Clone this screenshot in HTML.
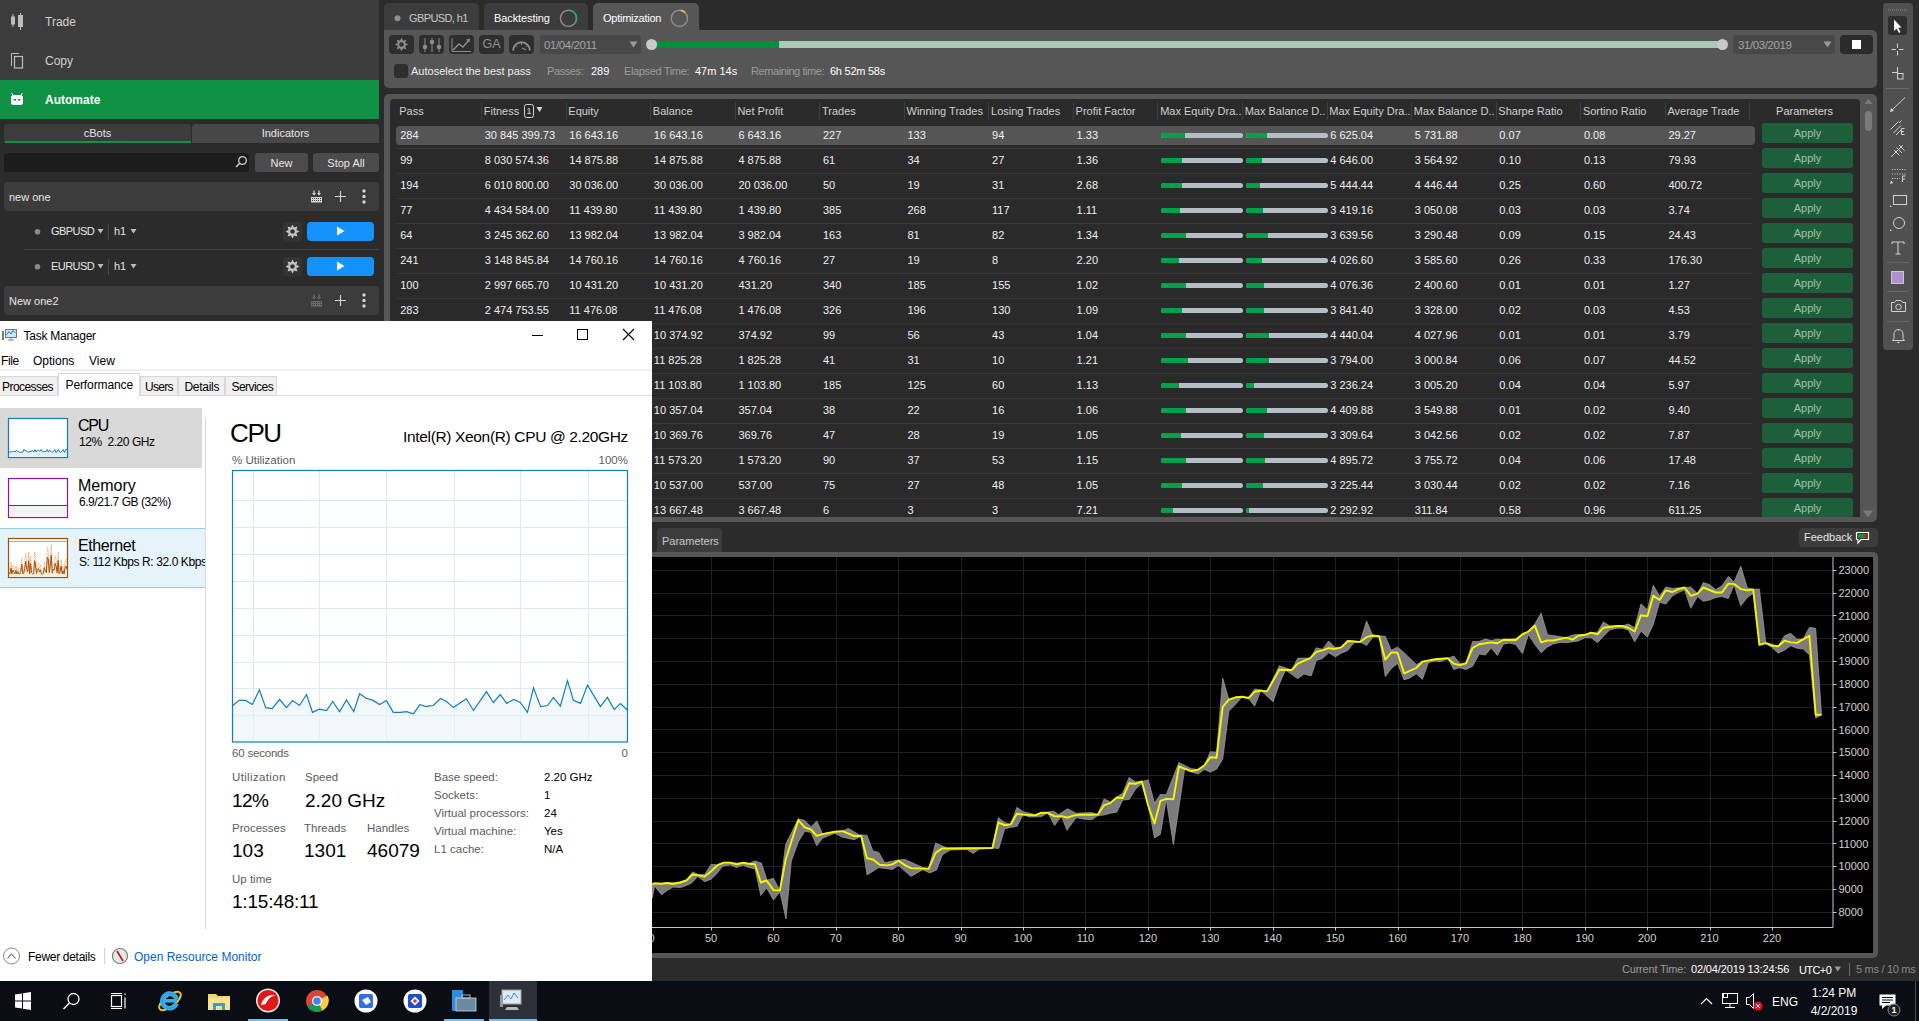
<!DOCTYPE html>
<html><head><meta charset="utf-8"><title>cTrader Optimization</title>
<style>
html,body{margin:0;padding:0;}
body{width:1919px;height:1021px;overflow:hidden;position:relative;background:#2b2b2b;font-family:"Liberation Sans", sans-serif;}
.t{position:absolute;white-space:nowrap;}
.r{position:absolute;}
svg{position:absolute;overflow:visible;}
</style></head><body>

<div class="r" style="left:0px;top:0px;width:379px;height:80px;background:#3c3c3c;"></div>
<div class="r" style="left:0px;top:80px;width:379px;height:39px;background:#0f9146;"></div>
<div class="t " style="left:45.00px;top:15.84px;font-size:12px;line-height:12px;color:#d2d2d2;font-weight:normal;">Trade</div>
<div class="t " style="left:45.00px;top:54.84px;font-size:12px;line-height:12px;color:#d2d2d2;font-weight:normal;">Copy</div>
<div class="t " style="left:45.00px;top:93.84px;font-size:12px;line-height:12px;color:#ffffff;font-weight:bold;">Automate</div>
<svg style="left:0;top:0" width="30" height="120"><rect x="11" y="16.5" width="4" height="8" fill="#bdbdbd"/><line x1="13" y1="14" x2="13" y2="27" stroke="#bdbdbd" stroke-width="1"/><rect x="18" y="15" width="5" height="12" fill="#bdbdbd"/><line x1="20.5" y1="13" x2="20.5" y2="30" stroke="#bdbdbd" stroke-width="1"/><path d="M11.5 66 V53.5 H19" fill="none" stroke="#bdbdbd" stroke-width="1"/><rect x="14.5" y="56.5" width="8" height="11.5" fill="none" stroke="#bdbdbd" stroke-width="1.2"/><rect x="11" y="95" width="12" height="10" rx="2.5" fill="#fff"/><rect x="13.5" y="99" width="2.5" height="1.5" fill="#0f9146"/><rect x="18" y="99" width="2.5" height="1.5" fill="#0f9146"/><line x1="11.5" y1="93" x2="13" y2="95" stroke="#fff" stroke-width="1"/><line x1="22.5" y1="93" x2="21" y2="95" stroke="#fff" stroke-width="1"/></svg>
<div class="r" style="left:4px;top:124px;width:187px;height:19px;background:#3c3c3c;border-radius:4px 4px 0 0;"></div>
<div class="r" style="left:5px;top:141px;width:186px;height:2px;background:#0f9146;"></div>
<div class="r" style="left:192px;top:124px;width:187px;height:19px;background:#474747;border-radius:4px 4px 0 0;"></div>
<div class="t " style="left:-202.50px;width:600px;text-align:center;top:127.69px;font-size:11px;line-height:11px;color:#e6e6e6;font-weight:normal;">cBots</div>
<div class="t " style="left:-14.50px;width:600px;text-align:center;top:127.69px;font-size:11px;line-height:11px;color:#e6e6e6;font-weight:normal;">Indicators</div>
<div class="r" style="left:4px;top:153px;width:245px;height:19px;background:#1c1c1c;border-radius:3px;"></div>
<svg style="left:234px;top:155px" width="14" height="14"><circle cx="8.5" cy="5.5" r="3.8" fill="none" stroke="#cfcfcf" stroke-width="1.3"/><line x1="5.8" y1="8.2" x2="2" y2="12" stroke="#cfcfcf" stroke-width="1.6"/></svg>
<div class="r" style="left:255px;top:153px;width:53px;height:19px;background:#4b4b4b;border-radius:3px;"></div>
<div class="t " style="left:-18.50px;width:600px;text-align:center;top:157.69px;font-size:11px;line-height:11px;color:#e6e6e6;font-weight:normal;">New</div>
<div class="r" style="left:313px;top:153px;width:66px;height:19px;background:#4b4b4b;border-radius:3px;"></div>
<div class="t " style="left:46.00px;width:600px;text-align:center;top:157.69px;font-size:11px;line-height:11px;color:#e6e6e6;font-weight:normal;">Stop All</div>
<div class="r" style="left:4px;top:182px;width:375px;height:29px;background:#3c3c3c;border-radius:4px;"></div>
<div class="t " style="left:9.00px;top:191.69px;font-size:11px;line-height:11px;color:#e6e6e6;font-weight:normal;">new one</div>
<svg style="left:305px;top:187px" width="70" height="20"><path d="M9 3.5 V7.5 M14 3.5 V7.5" stroke="#d6d6d6" stroke-width="1.3"/><path d="M7 6 L9 8.5 L11 6 Z M12 6 L14 8.5 L16 6 Z" fill="#d6d6d6"/><rect x="6" y="10" width="11" height="5.5" fill="#d6d6d6"/><rect x="7" y="11" width="1" height="1" fill="#3c3c3c"/><rect x="7" y="13" width="1" height="1" fill="#3c3c3c"/><rect x="9" y="11" width="1" height="1" fill="#3c3c3c"/><rect x="9" y="13" width="1" height="1" fill="#3c3c3c"/><rect x="11" y="11" width="1" height="1" fill="#3c3c3c"/><rect x="11" y="13" width="1" height="1" fill="#3c3c3c"/><rect x="13" y="11" width="1" height="1" fill="#3c3c3c"/><rect x="13" y="13" width="1" height="1" fill="#3c3c3c"/><rect x="15" y="11" width="1" height="1" fill="#3c3c3c"/><rect x="15" y="13" width="1" height="1" fill="#3c3c3c"/><path d="M35.5 4 V15 M30 9.5 H41" stroke="#d6d6d6" stroke-width="1.1"/><circle cx="59" cy="4" r="1.7" fill="#d6d6d6"/><circle cx="59" cy="9.5" r="1.7" fill="#d6d6d6"/><circle cx="59" cy="15" r="1.7" fill="#d6d6d6"/></svg>
<svg style="left:30px;top:226px" width="14" height="10"><circle cx="7.5" cy="5.8" r="2.8" fill="#8a8a8a"/></svg><div class="t " style="left:51.00px;top:225.69px;font-size:11px;line-height:11px;color:#e6e6e6;font-weight:normal;letter-spacing:-0.55px;">GBPUSD</div><div class="r" style="left:108px;top:224px;width:1px;height:16px;background:#474747;"></div><div class="t " style="left:114.00px;top:225.69px;font-size:11px;line-height:11px;color:#e6e6e6;font-weight:normal;">h1</div><svg style="left:0;top:226px" width="1" height="1"><path d="M97.5 3 H103.5 L100.5 7.6 Z M130.5 3 H136.5 L133.5 7.6 Z" fill="#bdbdbd"/></svg><div class="r" style="left:283px;top:222px;width:19px;height:19px;background:#333333;border-radius:3px;"></div><svg style="left:283px;top:222px" width="19" height="19"><g transform="translate(9.5,9.5)"><path d="M-1.7 -3.8 L0 -6.9 L1.7 -3.8 Z" fill="#c8c8c8" transform="rotate(0)"/><path d="M-1.7 -3.8 L0 -6.9 L1.7 -3.8 Z" fill="#c8c8c8" transform="rotate(45)"/><path d="M-1.7 -3.8 L0 -6.9 L1.7 -3.8 Z" fill="#c8c8c8" transform="rotate(90)"/><path d="M-1.7 -3.8 L0 -6.9 L1.7 -3.8 Z" fill="#c8c8c8" transform="rotate(135)"/><path d="M-1.7 -3.8 L0 -6.9 L1.7 -3.8 Z" fill="#c8c8c8" transform="rotate(180)"/><path d="M-1.7 -3.8 L0 -6.9 L1.7 -3.8 Z" fill="#c8c8c8" transform="rotate(225)"/><path d="M-1.7 -3.8 L0 -6.9 L1.7 -3.8 Z" fill="#c8c8c8" transform="rotate(270)"/><path d="M-1.7 -3.8 L0 -6.9 L1.7 -3.8 Z" fill="#c8c8c8" transform="rotate(315)"/><circle r="4.2" fill="#c8c8c8"/><circle r="2.3" fill="#333"/></g></svg><div class="r" style="left:307px;top:222px;width:67px;height:19px;background:#1593fc;border-radius:4px;"></div><svg style="left:336px;top:226px" width="10" height="10"><path d="M1 0.5 L8.5 5 L1 9.5 Z" fill="#fff"/></svg>
<div class="r" style="left:24px;top:249px;width:355px;height:1px;background:#444444;"></div>
<svg style="left:30px;top:261px" width="14" height="10"><circle cx="7.5" cy="5.8" r="2.8" fill="#8a8a8a"/></svg><div class="t " style="left:51.00px;top:260.69px;font-size:11px;line-height:11px;color:#e6e6e6;font-weight:normal;letter-spacing:-0.55px;">EURUSD</div><div class="r" style="left:108px;top:259px;width:1px;height:16px;background:#474747;"></div><div class="t " style="left:114.00px;top:260.69px;font-size:11px;line-height:11px;color:#e6e6e6;font-weight:normal;">h1</div><svg style="left:0;top:261px" width="1" height="1"><path d="M97.5 3 H103.5 L100.5 7.6 Z M130.5 3 H136.5 L133.5 7.6 Z" fill="#bdbdbd"/></svg><div class="r" style="left:283px;top:257px;width:19px;height:19px;background:#333333;border-radius:3px;"></div><svg style="left:283px;top:257px" width="19" height="19"><g transform="translate(9.5,9.5)"><path d="M-1.7 -3.8 L0 -6.9 L1.7 -3.8 Z" fill="#c8c8c8" transform="rotate(0)"/><path d="M-1.7 -3.8 L0 -6.9 L1.7 -3.8 Z" fill="#c8c8c8" transform="rotate(45)"/><path d="M-1.7 -3.8 L0 -6.9 L1.7 -3.8 Z" fill="#c8c8c8" transform="rotate(90)"/><path d="M-1.7 -3.8 L0 -6.9 L1.7 -3.8 Z" fill="#c8c8c8" transform="rotate(135)"/><path d="M-1.7 -3.8 L0 -6.9 L1.7 -3.8 Z" fill="#c8c8c8" transform="rotate(180)"/><path d="M-1.7 -3.8 L0 -6.9 L1.7 -3.8 Z" fill="#c8c8c8" transform="rotate(225)"/><path d="M-1.7 -3.8 L0 -6.9 L1.7 -3.8 Z" fill="#c8c8c8" transform="rotate(270)"/><path d="M-1.7 -3.8 L0 -6.9 L1.7 -3.8 Z" fill="#c8c8c8" transform="rotate(315)"/><circle r="4.2" fill="#c8c8c8"/><circle r="2.3" fill="#333"/></g></svg><div class="r" style="left:307px;top:257px;width:67px;height:19px;background:#1593fc;border-radius:4px;"></div><svg style="left:336px;top:261px" width="10" height="10"><path d="M1 0.5 L8.5 5 L1 9.5 Z" fill="#fff"/></svg>
<div class="r" style="left:4px;top:286px;width:375px;height:29px;background:#3c3c3c;border-radius:4px;"></div>
<div class="t " style="left:9.00px;top:295.69px;font-size:11px;line-height:11px;color:#e6e6e6;font-weight:normal;">New one2</div>
<svg style="left:305px;top:291px" width="70" height="20"><path d="M9 3.5 V7.5 M14 3.5 V7.5" stroke="#6a6a6a" stroke-width="1.3"/><path d="M7 6 L9 8.5 L11 6 Z M12 6 L14 8.5 L16 6 Z" fill="#6a6a6a"/><rect x="6" y="10" width="11" height="5.5" fill="#6a6a6a"/><rect x="7" y="11" width="1" height="1" fill="#3c3c3c"/><rect x="7" y="13" width="1" height="1" fill="#3c3c3c"/><rect x="9" y="11" width="1" height="1" fill="#3c3c3c"/><rect x="9" y="13" width="1" height="1" fill="#3c3c3c"/><rect x="11" y="11" width="1" height="1" fill="#3c3c3c"/><rect x="11" y="13" width="1" height="1" fill="#3c3c3c"/><rect x="13" y="11" width="1" height="1" fill="#3c3c3c"/><rect x="13" y="13" width="1" height="1" fill="#3c3c3c"/><rect x="15" y="11" width="1" height="1" fill="#3c3c3c"/><rect x="15" y="13" width="1" height="1" fill="#3c3c3c"/><path d="M35.5 4 V15 M30 9.5 H41" stroke="#d6d6d6" stroke-width="1.1"/><circle cx="59" cy="4" r="1.7" fill="#d6d6d6"/><circle cx="59" cy="9.5" r="1.7" fill="#d6d6d6"/><circle cx="59" cy="15" r="1.7" fill="#d6d6d6"/></svg>
<div class="r" style="left:384px;top:3px;width:95px;height:27px;background:#3c3c3c;border-radius:5px 5px 0 0;"></div>
<svg style="left:384px;top:3px" width="20" height="27"><circle cx="13.5" cy="15.3" r="3" fill="#8e8e8e"/></svg>
<div class="t " style="left:409.00px;top:12.69px;font-size:11px;line-height:11px;color:#c8c8c8;font-weight:normal;letter-spacing:-0.6px;">GBPUSD, h1</div>
<div class="r" style="left:484px;top:3px;width:104px;height:27px;background:#3c3c3c;border-radius:5px 5px 0 0;"></div>
<div class="t " style="left:494.00px;top:12.69px;font-size:11px;line-height:11px;color:#ffffff;font-weight:normal;letter-spacing:-0.1px;">Backtesting</div>
<div class="r" style="left:593px;top:3px;width:106px;height:27px;background:#565656;border-radius:5px 5px 0 0;"></div>
<div class="t " style="left:603.00px;top:12.69px;font-size:11px;line-height:11px;color:#ffffff;font-weight:normal;letter-spacing:-0.25px;">Optimization</div>
<svg style="left:0;top:0" width="1" height="1"><circle cx="568.5" cy="18.3" r="8.1" fill="none" stroke="#8f8f8f" stroke-width="1.4"/><path d="M569.91 10.32 A8.1 8.1 0 0 1 576.48 19.71" fill="none" stroke="#1fb34a" stroke-width="1.6"/></svg>
<svg style="left:0;top:0" width="1" height="1"><circle cx="679.4" cy="18.3" r="8.1" fill="none" stroke="#8f8f8f" stroke-width="1.4"/><path d="M680.53 10.28 A8.1 8.1 0 0 1 685.13 12.57" fill="none" stroke="#e8c619" stroke-width="1.6"/></svg>
<div class="r" style="left:384px;top:30px;width:1493px;height:58px;background:#565656;border-radius:0 5px 5px 5px;"></div>
<div class="r" style="left:389px;top:35px;width:25px;height:19px;background:#2e2e2e;border-radius:4px;"></div>
<div class="r" style="left:419px;top:35px;width:25px;height:19px;background:#2e2e2e;border-radius:4px;"></div>
<div class="r" style="left:449px;top:35px;width:25px;height:19px;background:#2e2e2e;border-radius:4px;"></div>
<div class="r" style="left:479px;top:35px;width:25px;height:19px;background:#2e2e2e;border-radius:4px;"></div>
<div class="r" style="left:509px;top:35px;width:25px;height:19px;background:#2e2e2e;border-radius:4px;"></div>
<svg style="left:0;top:0" width="1" height="1"><g transform="translate(401.5,44.5)"><path d="M-1.6 -3.6 L0 -6.8 L1.6 -3.6 Z" fill="#8c8c8c" transform="rotate(0)"/><path d="M-1.6 -3.6 L0 -6.8 L1.6 -3.6 Z" fill="#8c8c8c" transform="rotate(45)"/><path d="M-1.6 -3.6 L0 -6.8 L1.6 -3.6 Z" fill="#8c8c8c" transform="rotate(90)"/><path d="M-1.6 -3.6 L0 -6.8 L1.6 -3.6 Z" fill="#8c8c8c" transform="rotate(135)"/><path d="M-1.6 -3.6 L0 -6.8 L1.6 -3.6 Z" fill="#8c8c8c" transform="rotate(180)"/><path d="M-1.6 -3.6 L0 -6.8 L1.6 -3.6 Z" fill="#8c8c8c" transform="rotate(225)"/><path d="M-1.6 -3.6 L0 -6.8 L1.6 -3.6 Z" fill="#8c8c8c" transform="rotate(270)"/><path d="M-1.6 -3.6 L0 -6.8 L1.6 -3.6 Z" fill="#8c8c8c" transform="rotate(315)"/><circle r="3.9" fill="#8c8c8c"/><circle r="2.3" fill="#2e2e2e"/></g><path d="M425 38 V52 M432 38 V52 M439 38 V52" stroke="#8c8c8c" stroke-width="1"/><circle cx="425" cy="47" r="2.3" fill="#8c8c8c"/><circle cx="432" cy="42" r="2.3" fill="#8c8c8c"/><circle cx="439" cy="47" r="2.3" fill="#8c8c8c"/><path d="M452 38 V51.5 H471" fill="none" stroke="#8c8c8c" stroke-width="1"/><path d="M453 50 L459 44 L463 47 L469 40" fill="none" stroke="#8c8c8c" stroke-width="1.5"/><path d="M466 39.5 L470 38.5 L469.5 42.5 Z" fill="#8c8c8c"/></svg>
<div class="t " style="left:191.50px;width:600px;text-align:center;top:38.22px;font-size:12.5px;line-height:12.5px;color:#909090;font-weight:normal;">GA</div>
<svg style="left:509px;top:35px" width="25" height="19"><path d="M4.2 15.5 A8.3 8.3 0 0 1 20.8 15.5" fill="none" stroke="#8c8c8c" stroke-width="2"/><path d="M12.5 8.5 V10 M7.3 11 L8.3 11.8 M17.7 11 L16.7 11.8" stroke="#8c8c8c" stroke-width="1"/><path d="M13 13 L17 14.8" stroke="#8c8c8c" stroke-width="1.1"/></svg>
<div class="r" style="left:540px;top:35px;width:101px;height:19px;background:#484848;border-radius:3px;"></div>
<div class="t " style="left:544.00px;top:39.77px;font-size:11.5px;line-height:11.5px;color:#a3a3a3;font-weight:normal;letter-spacing:-0.4px;">01/04/2011</div>
<svg style="left:629px;top:41px" width="9" height="7"><path d="M0.5 0.5 H8.5 L4.5 6.5 Z" fill="#9a9a9a"/></svg>
<div class="r" style="left:657px;top:41px;width:122px;height:7px;background:#00913f;"></div>
<div class="r" style="left:779px;top:41px;width:940px;height:7px;background:#a8c9b2;"></div>
<svg style="left:0;top:0" width="1" height="1"><circle cx="651.6" cy="44.5" r="5.5" fill="#c9c9c9"/><circle cx="1722.5" cy="44.5" r="5.5" fill="#c9c9c9"/></svg>
<div class="r" style="left:1733px;top:35px;width:102px;height:19px;background:#484848;border-radius:3px;"></div>
<div class="t " style="left:1738.00px;top:39.77px;font-size:11.5px;line-height:11.5px;color:#a3a3a3;font-weight:normal;letter-spacing:-0.4px;">31/03/2019</div>
<svg style="left:1823px;top:41px" width="9" height="7"><path d="M0.5 0.5 H8.5 L4.5 6.5 Z" fill="#9a9a9a"/></svg>
<div class="r" style="left:1840px;top:35px;width:33px;height:19px;background:#2b2b2b;border-radius:4px;"></div>
<div class="r" style="left:1852px;top:40px;width:9px;height:9px;background:#ffffff;"></div>
<div class="r" style="left:394px;top:64px;width:14px;height:14px;background:#2e2e2e;border-radius:3px;"></div>
<div class="t " style="left:411.00px;top:65.69px;font-size:11px;line-height:11px;color:#ececec;font-weight:normal;">Autoselect the best pass</div>
<div class="t " style="left:547.00px;top:65.69px;font-size:11px;line-height:11px;color:#9c9c9c;font-weight:normal;letter-spacing:-0.4px;">Passes:</div>
<div class="t " style="left:591.00px;top:65.69px;font-size:11px;line-height:11px;color:#ffffff;font-weight:normal;">289</div>
<div class="t " style="left:624.00px;top:65.69px;font-size:11px;line-height:11px;color:#9c9c9c;font-weight:normal;letter-spacing:-0.35px;">Elapsed Time:</div>
<div class="t " style="left:695.00px;top:65.69px;font-size:11px;line-height:11px;color:#ffffff;font-weight:normal;">47m 14s</div>
<div class="t " style="left:751.00px;top:65.69px;font-size:11px;line-height:11px;color:#9c9c9c;font-weight:normal;letter-spacing:-0.42px;">Remaining time:</div>
<div class="t " style="left:830.00px;top:65.69px;font-size:11px;line-height:11px;color:#ffffff;font-weight:normal;letter-spacing:-0.25px;">6h 52m 58s</div>
<div class="r" style="left:384px;top:94px;width:1493px;height:428px;background:#565656;border-radius:5px;"></div>
<div class="r" style="left:390px;top:99px;width:1470px;height:418px;background:#2a2a2a;border-radius:4px 4px 0 0;"></div>
<div class="t " style="left:399.20px;top:105.99px;font-size:11px;line-height:11px;color:#cfcfcf;font-weight:normal;">Pass</div>
<div class="t " style="left:483.75px;top:105.99px;font-size:11px;line-height:11px;color:#cfcfcf;font-weight:normal;">Fitness</div>
<div class="r" style="left:481px;top:102px;width:1px;height:18px;background:#3e3e3e;"></div>
<div class="t " style="left:568.30px;top:105.99px;font-size:11px;line-height:11px;color:#cfcfcf;font-weight:normal;">Equity</div>
<div class="r" style="left:566px;top:102px;width:1px;height:18px;background:#3e3e3e;"></div>
<div class="t " style="left:652.85px;top:105.99px;font-size:11px;line-height:11px;color:#cfcfcf;font-weight:normal;">Balance</div>
<div class="r" style="left:650px;top:102px;width:1px;height:18px;background:#3e3e3e;"></div>
<div class="t " style="left:737.40px;top:105.99px;font-size:11px;line-height:11px;color:#cfcfcf;font-weight:normal;">Net Profit</div>
<div class="r" style="left:735px;top:102px;width:1px;height:18px;background:#3e3e3e;"></div>
<div class="t " style="left:821.95px;top:105.99px;font-size:11px;line-height:11px;color:#cfcfcf;font-weight:normal;">Trades</div>
<div class="r" style="left:819px;top:102px;width:1px;height:18px;background:#3e3e3e;"></div>
<div class="t " style="left:906.50px;top:105.99px;font-size:11px;line-height:11px;color:#cfcfcf;font-weight:normal;">Winning Trades</div>
<div class="r" style="left:904px;top:102px;width:1px;height:18px;background:#3e3e3e;"></div>
<div class="t " style="left:991.05px;top:105.99px;font-size:11px;line-height:11px;color:#cfcfcf;font-weight:normal;">Losing Trades</div>
<div class="r" style="left:988px;top:102px;width:1px;height:18px;background:#3e3e3e;"></div>
<div class="t " style="left:1075.60px;top:105.99px;font-size:11px;line-height:11px;color:#cfcfcf;font-weight:normal;">Profit Factor</div>
<div class="r" style="left:1073px;top:102px;width:1px;height:18px;background:#3e3e3e;"></div>
<div class="t " style="left:1160.15px;top:105.99px;font-size:11px;line-height:11px;color:#cfcfcf;font-weight:normal;">Max Equity Dra..</div>
<div class="r" style="left:1157px;top:102px;width:1px;height:18px;background:#3e3e3e;"></div>
<div class="t " style="left:1244.70px;top:105.99px;font-size:11px;line-height:11px;color:#cfcfcf;font-weight:normal;">Max Balance D..</div>
<div class="r" style="left:1242px;top:102px;width:1px;height:18px;background:#3e3e3e;"></div>
<div class="t " style="left:1329.25px;top:105.99px;font-size:11px;line-height:11px;color:#cfcfcf;font-weight:normal;">Max Equity Dra..</div>
<div class="r" style="left:1327px;top:102px;width:1px;height:18px;background:#3e3e3e;"></div>
<div class="t " style="left:1413.80px;top:105.99px;font-size:11px;line-height:11px;color:#cfcfcf;font-weight:normal;">Max Balance D..</div>
<div class="r" style="left:1411px;top:102px;width:1px;height:18px;background:#3e3e3e;"></div>
<div class="t " style="left:1498.35px;top:105.99px;font-size:11px;line-height:11px;color:#cfcfcf;font-weight:normal;">Sharpe Ratio</div>
<div class="r" style="left:1496px;top:102px;width:1px;height:18px;background:#3e3e3e;"></div>
<div class="t " style="left:1582.90px;top:105.99px;font-size:11px;line-height:11px;color:#cfcfcf;font-weight:normal;">Sortino Ratio</div>
<div class="r" style="left:1580px;top:102px;width:1px;height:18px;background:#3e3e3e;"></div>
<div class="t " style="left:1667.45px;top:105.99px;font-size:11px;line-height:11px;color:#cfcfcf;font-weight:normal;">Average Trade</div>
<div class="r" style="left:1665px;top:102px;width:1px;height:18px;background:#3e3e3e;"></div>
<div class="r" style="left:1749px;top:102px;width:1px;height:18px;background:#3e3e3e;"></div>
<svg style="left:0;top:0" width="1" height="1"><rect x="524.5" y="104.5" width="9" height="13" rx="2" fill="none" stroke="#d4d4d4" stroke-width="1"/><path d="M536.5 107 H542.5 L539.5 112 Z" fill="#d4d4d4"/></svg>
<div class="t " style="left:229.00px;width:600px;text-align:center;top:106.88px;font-size:9px;line-height:9px;color:#d4d4d4;font-weight:normal;">1</div>
<div class="t " style="left:1504.50px;width:600px;text-align:center;top:105.69px;font-size:11px;line-height:11px;color:#d4d4d4;font-weight:normal;">Parameters</div>
<div class="r" style="left:396px;top:126px;width:1359px;height:19px;background:#555555;border-radius:4px;"></div>
<div class="t " style="left:400.20px;top:129.69px;font-size:11px;line-height:11px;color:#f0f0f0;font-weight:normal;">284</div>
<div class="t " style="left:484.75px;top:129.69px;font-size:11px;line-height:11px;color:#f0f0f0;font-weight:normal;">30 845 399.73</div>
<div class="t " style="left:569.30px;top:129.69px;font-size:11px;line-height:11px;color:#f0f0f0;font-weight:normal;">16 643.16</div>
<div class="t " style="left:653.85px;top:129.69px;font-size:11px;line-height:11px;color:#f0f0f0;font-weight:normal;">16 643.16</div>
<div class="t " style="left:738.40px;top:129.69px;font-size:11px;line-height:11px;color:#f0f0f0;font-weight:normal;">6 643.16</div>
<div class="t " style="left:822.95px;top:129.69px;font-size:11px;line-height:11px;color:#f0f0f0;font-weight:normal;">227</div>
<div class="t " style="left:907.50px;top:129.69px;font-size:11px;line-height:11px;color:#f0f0f0;font-weight:normal;">133</div>
<div class="t " style="left:992.05px;top:129.69px;font-size:11px;line-height:11px;color:#f0f0f0;font-weight:normal;">94</div>
<div class="t " style="left:1076.60px;top:129.69px;font-size:11px;line-height:11px;color:#f0f0f0;font-weight:normal;">1.33</div>
<div class="r" style="left:1161px;top:133px;width:82px;height:5px;background:#b3bfc5;border-radius:3px;"></div>
<div class="r" style="left:1161px;top:133px;width:24px;height:5px;background:#00a14b;border-radius:3px 0 0 3px;"></div>
<div class="r" style="left:1246px;top:133px;width:82px;height:5px;background:#b3bfc5;border-radius:3px;"></div>
<div class="r" style="left:1246px;top:133px;width:21px;height:5px;background:#00a14b;border-radius:3px 0 0 3px;"></div>
<div class="t " style="left:1330.25px;top:129.69px;font-size:11px;line-height:11px;color:#f0f0f0;font-weight:normal;">6 625.04</div>
<div class="t " style="left:1414.80px;top:129.69px;font-size:11px;line-height:11px;color:#f0f0f0;font-weight:normal;">5 731.88</div>
<div class="t " style="left:1499.35px;top:129.69px;font-size:11px;line-height:11px;color:#f0f0f0;font-weight:normal;">0.07</div>
<div class="t " style="left:1583.90px;top:129.69px;font-size:11px;line-height:11px;color:#f0f0f0;font-weight:normal;">0.08</div>
<div class="t " style="left:1668.45px;top:129.69px;font-size:11px;line-height:11px;color:#f0f0f0;font-weight:normal;">29.27</div>
<div class="r" style="left:1762px;top:123px;width:91px;height:20px;background:#1d5f3a;border-radius:3px;"></div>
<div class="t " style="left:1507.50px;width:600px;text-align:center;top:128.09px;font-size:11px;line-height:11px;color:#a3c2ab;font-weight:normal;">Apply</div>
<div class="r" style="left:396px;top:148px;width:1357px;height:1px;background:#383838;"></div>
<div class="t " style="left:400.20px;top:154.69px;font-size:11px;line-height:11px;color:#f0f0f0;font-weight:normal;">99</div>
<div class="t " style="left:484.75px;top:154.69px;font-size:11px;line-height:11px;color:#f0f0f0;font-weight:normal;">8 030 574.36</div>
<div class="t " style="left:569.30px;top:154.69px;font-size:11px;line-height:11px;color:#f0f0f0;font-weight:normal;">14 875.88</div>
<div class="t " style="left:653.85px;top:154.69px;font-size:11px;line-height:11px;color:#f0f0f0;font-weight:normal;">14 875.88</div>
<div class="t " style="left:738.40px;top:154.69px;font-size:11px;line-height:11px;color:#f0f0f0;font-weight:normal;">4 875.88</div>
<div class="t " style="left:822.95px;top:154.69px;font-size:11px;line-height:11px;color:#f0f0f0;font-weight:normal;">61</div>
<div class="t " style="left:907.50px;top:154.69px;font-size:11px;line-height:11px;color:#f0f0f0;font-weight:normal;">34</div>
<div class="t " style="left:992.05px;top:154.69px;font-size:11px;line-height:11px;color:#f0f0f0;font-weight:normal;">27</div>
<div class="t " style="left:1076.60px;top:154.69px;font-size:11px;line-height:11px;color:#f0f0f0;font-weight:normal;">1.36</div>
<div class="r" style="left:1161px;top:158px;width:82px;height:5px;background:#b3bfc5;border-radius:3px;"></div>
<div class="r" style="left:1161px;top:158px;width:21px;height:5px;background:#00a14b;border-radius:3px 0 0 3px;"></div>
<div class="r" style="left:1246px;top:158px;width:82px;height:5px;background:#b3bfc5;border-radius:3px;"></div>
<div class="r" style="left:1246px;top:158px;width:16px;height:5px;background:#00a14b;border-radius:3px 0 0 3px;"></div>
<div class="t " style="left:1330.25px;top:154.69px;font-size:11px;line-height:11px;color:#f0f0f0;font-weight:normal;">4 646.00</div>
<div class="t " style="left:1414.80px;top:154.69px;font-size:11px;line-height:11px;color:#f0f0f0;font-weight:normal;">3 564.92</div>
<div class="t " style="left:1499.35px;top:154.69px;font-size:11px;line-height:11px;color:#f0f0f0;font-weight:normal;">0.10</div>
<div class="t " style="left:1583.90px;top:154.69px;font-size:11px;line-height:11px;color:#f0f0f0;font-weight:normal;">0.13</div>
<div class="t " style="left:1668.45px;top:154.69px;font-size:11px;line-height:11px;color:#f0f0f0;font-weight:normal;">79.93</div>
<div class="r" style="left:1762px;top:148px;width:91px;height:20px;background:#1d5f3a;border-radius:3px;"></div>
<div class="t " style="left:1507.50px;width:600px;text-align:center;top:153.09px;font-size:11px;line-height:11px;color:#a3c2ab;font-weight:normal;">Apply</div>
<div class="r" style="left:396px;top:173px;width:1357px;height:1px;background:#383838;"></div>
<div class="t " style="left:400.20px;top:179.69px;font-size:11px;line-height:11px;color:#f0f0f0;font-weight:normal;">194</div>
<div class="t " style="left:484.75px;top:179.69px;font-size:11px;line-height:11px;color:#f0f0f0;font-weight:normal;">6 010 800.00</div>
<div class="t " style="left:569.30px;top:179.69px;font-size:11px;line-height:11px;color:#f0f0f0;font-weight:normal;">30 036.00</div>
<div class="t " style="left:653.85px;top:179.69px;font-size:11px;line-height:11px;color:#f0f0f0;font-weight:normal;">30 036.00</div>
<div class="t " style="left:738.40px;top:179.69px;font-size:11px;line-height:11px;color:#f0f0f0;font-weight:normal;">20 036.00</div>
<div class="t " style="left:822.95px;top:179.69px;font-size:11px;line-height:11px;color:#f0f0f0;font-weight:normal;">50</div>
<div class="t " style="left:907.50px;top:179.69px;font-size:11px;line-height:11px;color:#f0f0f0;font-weight:normal;">19</div>
<div class="t " style="left:992.05px;top:179.69px;font-size:11px;line-height:11px;color:#f0f0f0;font-weight:normal;">31</div>
<div class="t " style="left:1076.60px;top:179.69px;font-size:11px;line-height:11px;color:#f0f0f0;font-weight:normal;">2.68</div>
<div class="r" style="left:1161px;top:183px;width:82px;height:5px;background:#b3bfc5;border-radius:3px;"></div>
<div class="r" style="left:1161px;top:183px;width:21px;height:5px;background:#00a14b;border-radius:3px 0 0 3px;"></div>
<div class="r" style="left:1246px;top:183px;width:82px;height:5px;background:#b3bfc5;border-radius:3px;"></div>
<div class="r" style="left:1246px;top:183px;width:14px;height:5px;background:#00a14b;border-radius:3px 0 0 3px;"></div>
<div class="t " style="left:1330.25px;top:179.69px;font-size:11px;line-height:11px;color:#f0f0f0;font-weight:normal;">5 444.44</div>
<div class="t " style="left:1414.80px;top:179.69px;font-size:11px;line-height:11px;color:#f0f0f0;font-weight:normal;">4 446.44</div>
<div class="t " style="left:1499.35px;top:179.69px;font-size:11px;line-height:11px;color:#f0f0f0;font-weight:normal;">0.25</div>
<div class="t " style="left:1583.90px;top:179.69px;font-size:11px;line-height:11px;color:#f0f0f0;font-weight:normal;">0.60</div>
<div class="t " style="left:1668.45px;top:179.69px;font-size:11px;line-height:11px;color:#f0f0f0;font-weight:normal;">400.72</div>
<div class="r" style="left:1762px;top:173px;width:91px;height:20px;background:#1d5f3a;border-radius:3px;"></div>
<div class="t " style="left:1507.50px;width:600px;text-align:center;top:178.09px;font-size:11px;line-height:11px;color:#a3c2ab;font-weight:normal;">Apply</div>
<div class="r" style="left:396px;top:198px;width:1357px;height:1px;background:#383838;"></div>
<div class="t " style="left:400.20px;top:204.69px;font-size:11px;line-height:11px;color:#f0f0f0;font-weight:normal;">77</div>
<div class="t " style="left:484.75px;top:204.69px;font-size:11px;line-height:11px;color:#f0f0f0;font-weight:normal;">4 434 584.00</div>
<div class="t " style="left:569.30px;top:204.69px;font-size:11px;line-height:11px;color:#f0f0f0;font-weight:normal;">11 439.80</div>
<div class="t " style="left:653.85px;top:204.69px;font-size:11px;line-height:11px;color:#f0f0f0;font-weight:normal;">11 439.80</div>
<div class="t " style="left:738.40px;top:204.69px;font-size:11px;line-height:11px;color:#f0f0f0;font-weight:normal;">1 439.80</div>
<div class="t " style="left:822.95px;top:204.69px;font-size:11px;line-height:11px;color:#f0f0f0;font-weight:normal;">385</div>
<div class="t " style="left:907.50px;top:204.69px;font-size:11px;line-height:11px;color:#f0f0f0;font-weight:normal;">268</div>
<div class="t " style="left:992.05px;top:204.69px;font-size:11px;line-height:11px;color:#f0f0f0;font-weight:normal;">117</div>
<div class="t " style="left:1076.60px;top:204.69px;font-size:11px;line-height:11px;color:#f0f0f0;font-weight:normal;">1.11</div>
<div class="r" style="left:1161px;top:208px;width:82px;height:5px;background:#b3bfc5;border-radius:3px;"></div>
<div class="r" style="left:1161px;top:208px;width:19px;height:5px;background:#00a14b;border-radius:3px 0 0 3px;"></div>
<div class="r" style="left:1246px;top:208px;width:82px;height:5px;background:#b3bfc5;border-radius:3px;"></div>
<div class="r" style="left:1246px;top:208px;width:17px;height:5px;background:#00a14b;border-radius:3px 0 0 3px;"></div>
<div class="t " style="left:1330.25px;top:204.69px;font-size:11px;line-height:11px;color:#f0f0f0;font-weight:normal;">3 419.16</div>
<div class="t " style="left:1414.80px;top:204.69px;font-size:11px;line-height:11px;color:#f0f0f0;font-weight:normal;">3 050.08</div>
<div class="t " style="left:1499.35px;top:204.69px;font-size:11px;line-height:11px;color:#f0f0f0;font-weight:normal;">0.03</div>
<div class="t " style="left:1583.90px;top:204.69px;font-size:11px;line-height:11px;color:#f0f0f0;font-weight:normal;">0.03</div>
<div class="t " style="left:1668.45px;top:204.69px;font-size:11px;line-height:11px;color:#f0f0f0;font-weight:normal;">3.74</div>
<div class="r" style="left:1762px;top:198px;width:91px;height:20px;background:#1d5f3a;border-radius:3px;"></div>
<div class="t " style="left:1507.50px;width:600px;text-align:center;top:203.09px;font-size:11px;line-height:11px;color:#a3c2ab;font-weight:normal;">Apply</div>
<div class="r" style="left:396px;top:223px;width:1357px;height:1px;background:#383838;"></div>
<div class="t " style="left:400.20px;top:229.69px;font-size:11px;line-height:11px;color:#f0f0f0;font-weight:normal;">64</div>
<div class="t " style="left:484.75px;top:229.69px;font-size:11px;line-height:11px;color:#f0f0f0;font-weight:normal;">3 245 362.60</div>
<div class="t " style="left:569.30px;top:229.69px;font-size:11px;line-height:11px;color:#f0f0f0;font-weight:normal;">13 982.04</div>
<div class="t " style="left:653.85px;top:229.69px;font-size:11px;line-height:11px;color:#f0f0f0;font-weight:normal;">13 982.04</div>
<div class="t " style="left:738.40px;top:229.69px;font-size:11px;line-height:11px;color:#f0f0f0;font-weight:normal;">3 982.04</div>
<div class="t " style="left:822.95px;top:229.69px;font-size:11px;line-height:11px;color:#f0f0f0;font-weight:normal;">163</div>
<div class="t " style="left:907.50px;top:229.69px;font-size:11px;line-height:11px;color:#f0f0f0;font-weight:normal;">81</div>
<div class="t " style="left:992.05px;top:229.69px;font-size:11px;line-height:11px;color:#f0f0f0;font-weight:normal;">82</div>
<div class="t " style="left:1076.60px;top:229.69px;font-size:11px;line-height:11px;color:#f0f0f0;font-weight:normal;">1.34</div>
<div class="r" style="left:1161px;top:233px;width:82px;height:5px;background:#b3bfc5;border-radius:3px;"></div>
<div class="r" style="left:1161px;top:233px;width:25px;height:5px;background:#00a14b;border-radius:3px 0 0 3px;"></div>
<div class="r" style="left:1246px;top:233px;width:82px;height:5px;background:#b3bfc5;border-radius:3px;"></div>
<div class="r" style="left:1246px;top:233px;width:22px;height:5px;background:#00a14b;border-radius:3px 0 0 3px;"></div>
<div class="t " style="left:1330.25px;top:229.69px;font-size:11px;line-height:11px;color:#f0f0f0;font-weight:normal;">3 639.56</div>
<div class="t " style="left:1414.80px;top:229.69px;font-size:11px;line-height:11px;color:#f0f0f0;font-weight:normal;">3 290.48</div>
<div class="t " style="left:1499.35px;top:229.69px;font-size:11px;line-height:11px;color:#f0f0f0;font-weight:normal;">0.09</div>
<div class="t " style="left:1583.90px;top:229.69px;font-size:11px;line-height:11px;color:#f0f0f0;font-weight:normal;">0.15</div>
<div class="t " style="left:1668.45px;top:229.69px;font-size:11px;line-height:11px;color:#f0f0f0;font-weight:normal;">24.43</div>
<div class="r" style="left:1762px;top:223px;width:91px;height:20px;background:#1d5f3a;border-radius:3px;"></div>
<div class="t " style="left:1507.50px;width:600px;text-align:center;top:228.09px;font-size:11px;line-height:11px;color:#a3c2ab;font-weight:normal;">Apply</div>
<div class="r" style="left:396px;top:248px;width:1357px;height:1px;background:#383838;"></div>
<div class="t " style="left:400.20px;top:254.69px;font-size:11px;line-height:11px;color:#f0f0f0;font-weight:normal;">241</div>
<div class="t " style="left:484.75px;top:254.69px;font-size:11px;line-height:11px;color:#f0f0f0;font-weight:normal;">3 148 845.84</div>
<div class="t " style="left:569.30px;top:254.69px;font-size:11px;line-height:11px;color:#f0f0f0;font-weight:normal;">14 760.16</div>
<div class="t " style="left:653.85px;top:254.69px;font-size:11px;line-height:11px;color:#f0f0f0;font-weight:normal;">14 760.16</div>
<div class="t " style="left:738.40px;top:254.69px;font-size:11px;line-height:11px;color:#f0f0f0;font-weight:normal;">4 760.16</div>
<div class="t " style="left:822.95px;top:254.69px;font-size:11px;line-height:11px;color:#f0f0f0;font-weight:normal;">27</div>
<div class="t " style="left:907.50px;top:254.69px;font-size:11px;line-height:11px;color:#f0f0f0;font-weight:normal;">19</div>
<div class="t " style="left:992.05px;top:254.69px;font-size:11px;line-height:11px;color:#f0f0f0;font-weight:normal;">8</div>
<div class="t " style="left:1076.60px;top:254.69px;font-size:11px;line-height:11px;color:#f0f0f0;font-weight:normal;">2.20</div>
<div class="r" style="left:1161px;top:258px;width:82px;height:5px;background:#b3bfc5;border-radius:3px;"></div>
<div class="r" style="left:1161px;top:258px;width:18px;height:5px;background:#00a14b;border-radius:3px 0 0 3px;"></div>
<div class="r" style="left:1246px;top:258px;width:82px;height:5px;background:#b3bfc5;border-radius:3px;"></div>
<div class="r" style="left:1246px;top:258px;width:16px;height:5px;background:#00a14b;border-radius:3px 0 0 3px;"></div>
<div class="t " style="left:1330.25px;top:254.69px;font-size:11px;line-height:11px;color:#f0f0f0;font-weight:normal;">4 026.60</div>
<div class="t " style="left:1414.80px;top:254.69px;font-size:11px;line-height:11px;color:#f0f0f0;font-weight:normal;">3 585.60</div>
<div class="t " style="left:1499.35px;top:254.69px;font-size:11px;line-height:11px;color:#f0f0f0;font-weight:normal;">0.26</div>
<div class="t " style="left:1583.90px;top:254.69px;font-size:11px;line-height:11px;color:#f0f0f0;font-weight:normal;">0.33</div>
<div class="t " style="left:1668.45px;top:254.69px;font-size:11px;line-height:11px;color:#f0f0f0;font-weight:normal;">176.30</div>
<div class="r" style="left:1762px;top:248px;width:91px;height:20px;background:#1d5f3a;border-radius:3px;"></div>
<div class="t " style="left:1507.50px;width:600px;text-align:center;top:253.09px;font-size:11px;line-height:11px;color:#a3c2ab;font-weight:normal;">Apply</div>
<div class="r" style="left:396px;top:273px;width:1357px;height:1px;background:#383838;"></div>
<div class="t " style="left:400.20px;top:279.69px;font-size:11px;line-height:11px;color:#f0f0f0;font-weight:normal;">100</div>
<div class="t " style="left:484.75px;top:279.69px;font-size:11px;line-height:11px;color:#f0f0f0;font-weight:normal;">2 997 665.70</div>
<div class="t " style="left:569.30px;top:279.69px;font-size:11px;line-height:11px;color:#f0f0f0;font-weight:normal;">10 431.20</div>
<div class="t " style="left:653.85px;top:279.69px;font-size:11px;line-height:11px;color:#f0f0f0;font-weight:normal;">10 431.20</div>
<div class="t " style="left:738.40px;top:279.69px;font-size:11px;line-height:11px;color:#f0f0f0;font-weight:normal;">431.20</div>
<div class="t " style="left:822.95px;top:279.69px;font-size:11px;line-height:11px;color:#f0f0f0;font-weight:normal;">340</div>
<div class="t " style="left:907.50px;top:279.69px;font-size:11px;line-height:11px;color:#f0f0f0;font-weight:normal;">185</div>
<div class="t " style="left:992.05px;top:279.69px;font-size:11px;line-height:11px;color:#f0f0f0;font-weight:normal;">155</div>
<div class="t " style="left:1076.60px;top:279.69px;font-size:11px;line-height:11px;color:#f0f0f0;font-weight:normal;">1.02</div>
<div class="r" style="left:1161px;top:283px;width:82px;height:5px;background:#b3bfc5;border-radius:3px;"></div>
<div class="r" style="left:1161px;top:283px;width:25px;height:5px;background:#00a14b;border-radius:3px 0 0 3px;"></div>
<div class="r" style="left:1246px;top:283px;width:82px;height:5px;background:#b3bfc5;border-radius:3px;"></div>
<div class="r" style="left:1246px;top:283px;width:18px;height:5px;background:#00a14b;border-radius:3px 0 0 3px;"></div>
<div class="t " style="left:1330.25px;top:279.69px;font-size:11px;line-height:11px;color:#f0f0f0;font-weight:normal;">4 076.36</div>
<div class="t " style="left:1414.80px;top:279.69px;font-size:11px;line-height:11px;color:#f0f0f0;font-weight:normal;">2 400.60</div>
<div class="t " style="left:1499.35px;top:279.69px;font-size:11px;line-height:11px;color:#f0f0f0;font-weight:normal;">0.01</div>
<div class="t " style="left:1583.90px;top:279.69px;font-size:11px;line-height:11px;color:#f0f0f0;font-weight:normal;">0.01</div>
<div class="t " style="left:1668.45px;top:279.69px;font-size:11px;line-height:11px;color:#f0f0f0;font-weight:normal;">1.27</div>
<div class="r" style="left:1762px;top:273px;width:91px;height:20px;background:#1d5f3a;border-radius:3px;"></div>
<div class="t " style="left:1507.50px;width:600px;text-align:center;top:278.09px;font-size:11px;line-height:11px;color:#a3c2ab;font-weight:normal;">Apply</div>
<div class="r" style="left:396px;top:298px;width:1357px;height:1px;background:#383838;"></div>
<div class="t " style="left:400.20px;top:304.69px;font-size:11px;line-height:11px;color:#f0f0f0;font-weight:normal;">283</div>
<div class="t " style="left:484.75px;top:304.69px;font-size:11px;line-height:11px;color:#f0f0f0;font-weight:normal;">2 474 753.55</div>
<div class="t " style="left:569.30px;top:304.69px;font-size:11px;line-height:11px;color:#f0f0f0;font-weight:normal;">11 476.08</div>
<div class="t " style="left:653.85px;top:304.69px;font-size:11px;line-height:11px;color:#f0f0f0;font-weight:normal;">11 476.08</div>
<div class="t " style="left:738.40px;top:304.69px;font-size:11px;line-height:11px;color:#f0f0f0;font-weight:normal;">1 476.08</div>
<div class="t " style="left:822.95px;top:304.69px;font-size:11px;line-height:11px;color:#f0f0f0;font-weight:normal;">326</div>
<div class="t " style="left:907.50px;top:304.69px;font-size:11px;line-height:11px;color:#f0f0f0;font-weight:normal;">196</div>
<div class="t " style="left:992.05px;top:304.69px;font-size:11px;line-height:11px;color:#f0f0f0;font-weight:normal;">130</div>
<div class="t " style="left:1076.60px;top:304.69px;font-size:11px;line-height:11px;color:#f0f0f0;font-weight:normal;">1.09</div>
<div class="r" style="left:1161px;top:308px;width:82px;height:5px;background:#b3bfc5;border-radius:3px;"></div>
<div class="r" style="left:1161px;top:308px;width:21px;height:5px;background:#00a14b;border-radius:3px 0 0 3px;"></div>
<div class="r" style="left:1246px;top:308px;width:82px;height:5px;background:#b3bfc5;border-radius:3px;"></div>
<div class="r" style="left:1246px;top:308px;width:18px;height:5px;background:#00a14b;border-radius:3px 0 0 3px;"></div>
<div class="t " style="left:1330.25px;top:304.69px;font-size:11px;line-height:11px;color:#f0f0f0;font-weight:normal;">3 841.40</div>
<div class="t " style="left:1414.80px;top:304.69px;font-size:11px;line-height:11px;color:#f0f0f0;font-weight:normal;">3 328.00</div>
<div class="t " style="left:1499.35px;top:304.69px;font-size:11px;line-height:11px;color:#f0f0f0;font-weight:normal;">0.02</div>
<div class="t " style="left:1583.90px;top:304.69px;font-size:11px;line-height:11px;color:#f0f0f0;font-weight:normal;">0.03</div>
<div class="t " style="left:1668.45px;top:304.69px;font-size:11px;line-height:11px;color:#f0f0f0;font-weight:normal;">4.53</div>
<div class="r" style="left:1762px;top:298px;width:91px;height:20px;background:#1d5f3a;border-radius:3px;"></div>
<div class="t " style="left:1507.50px;width:600px;text-align:center;top:303.09px;font-size:11px;line-height:11px;color:#a3c2ab;font-weight:normal;">Apply</div>
<div class="r" style="left:396px;top:323px;width:1357px;height:1px;background:#383838;"></div>
<div class="t " style="left:400.20px;top:329.69px;font-size:11px;line-height:11px;color:#f0f0f0;font-weight:normal;">201</div>
<div class="t " style="left:484.75px;top:329.69px;font-size:11px;line-height:11px;color:#f0f0f0;font-weight:normal;">2 301 120.40</div>
<div class="t " style="left:569.30px;top:329.69px;font-size:11px;line-height:11px;color:#f0f0f0;font-weight:normal;">10 374.92</div>
<div class="t " style="left:653.85px;top:329.69px;font-size:11px;line-height:11px;color:#f0f0f0;font-weight:normal;">10 374.92</div>
<div class="t " style="left:738.40px;top:329.69px;font-size:11px;line-height:11px;color:#f0f0f0;font-weight:normal;">374.92</div>
<div class="t " style="left:822.95px;top:329.69px;font-size:11px;line-height:11px;color:#f0f0f0;font-weight:normal;">99</div>
<div class="t " style="left:907.50px;top:329.69px;font-size:11px;line-height:11px;color:#f0f0f0;font-weight:normal;">56</div>
<div class="t " style="left:992.05px;top:329.69px;font-size:11px;line-height:11px;color:#f0f0f0;font-weight:normal;">43</div>
<div class="t " style="left:1076.60px;top:329.69px;font-size:11px;line-height:11px;color:#f0f0f0;font-weight:normal;">1.04</div>
<div class="r" style="left:1161px;top:333px;width:82px;height:5px;background:#b3bfc5;border-radius:3px;"></div>
<div class="r" style="left:1161px;top:333px;width:25px;height:5px;background:#00a14b;border-radius:3px 0 0 3px;"></div>
<div class="r" style="left:1246px;top:333px;width:82px;height:5px;background:#b3bfc5;border-radius:3px;"></div>
<div class="r" style="left:1246px;top:333px;width:23px;height:5px;background:#00a14b;border-radius:3px 0 0 3px;"></div>
<div class="t " style="left:1330.25px;top:329.69px;font-size:11px;line-height:11px;color:#f0f0f0;font-weight:normal;">4 440.04</div>
<div class="t " style="left:1414.80px;top:329.69px;font-size:11px;line-height:11px;color:#f0f0f0;font-weight:normal;">4 027.96</div>
<div class="t " style="left:1499.35px;top:329.69px;font-size:11px;line-height:11px;color:#f0f0f0;font-weight:normal;">0.01</div>
<div class="t " style="left:1583.90px;top:329.69px;font-size:11px;line-height:11px;color:#f0f0f0;font-weight:normal;">0.01</div>
<div class="t " style="left:1668.45px;top:329.69px;font-size:11px;line-height:11px;color:#f0f0f0;font-weight:normal;">3.79</div>
<div class="r" style="left:1762px;top:323px;width:91px;height:20px;background:#1d5f3a;border-radius:3px;"></div>
<div class="t " style="left:1507.50px;width:600px;text-align:center;top:328.09px;font-size:11px;line-height:11px;color:#a3c2ab;font-weight:normal;">Apply</div>
<div class="r" style="left:396px;top:348px;width:1357px;height:1px;background:#383838;"></div>
<div class="t " style="left:400.20px;top:354.69px;font-size:11px;line-height:11px;color:#f0f0f0;font-weight:normal;">152</div>
<div class="t " style="left:484.75px;top:354.69px;font-size:11px;line-height:11px;color:#f0f0f0;font-weight:normal;">2 210 448.18</div>
<div class="t " style="left:569.30px;top:354.69px;font-size:11px;line-height:11px;color:#f0f0f0;font-weight:normal;">11 825.28</div>
<div class="t " style="left:653.85px;top:354.69px;font-size:11px;line-height:11px;color:#f0f0f0;font-weight:normal;">11 825.28</div>
<div class="t " style="left:738.40px;top:354.69px;font-size:11px;line-height:11px;color:#f0f0f0;font-weight:normal;">1 825.28</div>
<div class="t " style="left:822.95px;top:354.69px;font-size:11px;line-height:11px;color:#f0f0f0;font-weight:normal;">41</div>
<div class="t " style="left:907.50px;top:354.69px;font-size:11px;line-height:11px;color:#f0f0f0;font-weight:normal;">31</div>
<div class="t " style="left:992.05px;top:354.69px;font-size:11px;line-height:11px;color:#f0f0f0;font-weight:normal;">10</div>
<div class="t " style="left:1076.60px;top:354.69px;font-size:11px;line-height:11px;color:#f0f0f0;font-weight:normal;">1.21</div>
<div class="r" style="left:1161px;top:358px;width:82px;height:5px;background:#b3bfc5;border-radius:3px;"></div>
<div class="r" style="left:1161px;top:358px;width:27px;height:5px;background:#00a14b;border-radius:3px 0 0 3px;"></div>
<div class="r" style="left:1246px;top:358px;width:82px;height:5px;background:#b3bfc5;border-radius:3px;"></div>
<div class="r" style="left:1246px;top:358px;width:23px;height:5px;background:#00a14b;border-radius:3px 0 0 3px;"></div>
<div class="t " style="left:1330.25px;top:354.69px;font-size:11px;line-height:11px;color:#f0f0f0;font-weight:normal;">3 794.00</div>
<div class="t " style="left:1414.80px;top:354.69px;font-size:11px;line-height:11px;color:#f0f0f0;font-weight:normal;">3 000.84</div>
<div class="t " style="left:1499.35px;top:354.69px;font-size:11px;line-height:11px;color:#f0f0f0;font-weight:normal;">0.06</div>
<div class="t " style="left:1583.90px;top:354.69px;font-size:11px;line-height:11px;color:#f0f0f0;font-weight:normal;">0.07</div>
<div class="t " style="left:1668.45px;top:354.69px;font-size:11px;line-height:11px;color:#f0f0f0;font-weight:normal;">44.52</div>
<div class="r" style="left:1762px;top:348px;width:91px;height:20px;background:#1d5f3a;border-radius:3px;"></div>
<div class="t " style="left:1507.50px;width:600px;text-align:center;top:353.09px;font-size:11px;line-height:11px;color:#a3c2ab;font-weight:normal;">Apply</div>
<div class="r" style="left:396px;top:373px;width:1357px;height:1px;background:#383838;"></div>
<div class="t " style="left:400.20px;top:379.69px;font-size:11px;line-height:11px;color:#f0f0f0;font-weight:normal;">37</div>
<div class="t " style="left:484.75px;top:379.69px;font-size:11px;line-height:11px;color:#f0f0f0;font-weight:normal;">2 105 032.77</div>
<div class="t " style="left:569.30px;top:379.69px;font-size:11px;line-height:11px;color:#f0f0f0;font-weight:normal;">11 103.80</div>
<div class="t " style="left:653.85px;top:379.69px;font-size:11px;line-height:11px;color:#f0f0f0;font-weight:normal;">11 103.80</div>
<div class="t " style="left:738.40px;top:379.69px;font-size:11px;line-height:11px;color:#f0f0f0;font-weight:normal;">1 103.80</div>
<div class="t " style="left:822.95px;top:379.69px;font-size:11px;line-height:11px;color:#f0f0f0;font-weight:normal;">185</div>
<div class="t " style="left:907.50px;top:379.69px;font-size:11px;line-height:11px;color:#f0f0f0;font-weight:normal;">125</div>
<div class="t " style="left:992.05px;top:379.69px;font-size:11px;line-height:11px;color:#f0f0f0;font-weight:normal;">60</div>
<div class="t " style="left:1076.60px;top:379.69px;font-size:11px;line-height:11px;color:#f0f0f0;font-weight:normal;">1.13</div>
<div class="r" style="left:1161px;top:383px;width:82px;height:5px;background:#b3bfc5;border-radius:3px;"></div>
<div class="r" style="left:1161px;top:383px;width:18px;height:5px;background:#00a14b;border-radius:3px 0 0 3px;"></div>
<div class="r" style="left:1246px;top:383px;width:82px;height:5px;background:#b3bfc5;border-radius:3px;"></div>
<div class="r" style="left:1246px;top:383px;width:8px;height:5px;background:#00a14b;border-radius:3px 0 0 3px;"></div>
<div class="t " style="left:1330.25px;top:379.69px;font-size:11px;line-height:11px;color:#f0f0f0;font-weight:normal;">3 236.24</div>
<div class="t " style="left:1414.80px;top:379.69px;font-size:11px;line-height:11px;color:#f0f0f0;font-weight:normal;">3 005.20</div>
<div class="t " style="left:1499.35px;top:379.69px;font-size:11px;line-height:11px;color:#f0f0f0;font-weight:normal;">0.04</div>
<div class="t " style="left:1583.90px;top:379.69px;font-size:11px;line-height:11px;color:#f0f0f0;font-weight:normal;">0.04</div>
<div class="t " style="left:1668.45px;top:379.69px;font-size:11px;line-height:11px;color:#f0f0f0;font-weight:normal;">5.97</div>
<div class="r" style="left:1762px;top:373px;width:91px;height:20px;background:#1d5f3a;border-radius:3px;"></div>
<div class="t " style="left:1507.50px;width:600px;text-align:center;top:378.09px;font-size:11px;line-height:11px;color:#a3c2ab;font-weight:normal;">Apply</div>
<div class="r" style="left:396px;top:398px;width:1357px;height:1px;background:#383838;"></div>
<div class="t " style="left:400.20px;top:404.69px;font-size:11px;line-height:11px;color:#f0f0f0;font-weight:normal;">118</div>
<div class="t " style="left:484.75px;top:404.69px;font-size:11px;line-height:11px;color:#f0f0f0;font-weight:normal;">1 998 201.09</div>
<div class="t " style="left:569.30px;top:404.69px;font-size:11px;line-height:11px;color:#f0f0f0;font-weight:normal;">10 357.04</div>
<div class="t " style="left:653.85px;top:404.69px;font-size:11px;line-height:11px;color:#f0f0f0;font-weight:normal;">10 357.04</div>
<div class="t " style="left:738.40px;top:404.69px;font-size:11px;line-height:11px;color:#f0f0f0;font-weight:normal;">357.04</div>
<div class="t " style="left:822.95px;top:404.69px;font-size:11px;line-height:11px;color:#f0f0f0;font-weight:normal;">38</div>
<div class="t " style="left:907.50px;top:404.69px;font-size:11px;line-height:11px;color:#f0f0f0;font-weight:normal;">22</div>
<div class="t " style="left:992.05px;top:404.69px;font-size:11px;line-height:11px;color:#f0f0f0;font-weight:normal;">16</div>
<div class="t " style="left:1076.60px;top:404.69px;font-size:11px;line-height:11px;color:#f0f0f0;font-weight:normal;">1.06</div>
<div class="r" style="left:1161px;top:408px;width:82px;height:5px;background:#b3bfc5;border-radius:3px;"></div>
<div class="r" style="left:1161px;top:408px;width:25px;height:5px;background:#00a14b;border-radius:3px 0 0 3px;"></div>
<div class="r" style="left:1246px;top:408px;width:82px;height:5px;background:#b3bfc5;border-radius:3px;"></div>
<div class="r" style="left:1246px;top:408px;width:21px;height:5px;background:#00a14b;border-radius:3px 0 0 3px;"></div>
<div class="t " style="left:1330.25px;top:404.69px;font-size:11px;line-height:11px;color:#f0f0f0;font-weight:normal;">4 409.88</div>
<div class="t " style="left:1414.80px;top:404.69px;font-size:11px;line-height:11px;color:#f0f0f0;font-weight:normal;">3 549.88</div>
<div class="t " style="left:1499.35px;top:404.69px;font-size:11px;line-height:11px;color:#f0f0f0;font-weight:normal;">0.01</div>
<div class="t " style="left:1583.90px;top:404.69px;font-size:11px;line-height:11px;color:#f0f0f0;font-weight:normal;">0.02</div>
<div class="t " style="left:1668.45px;top:404.69px;font-size:11px;line-height:11px;color:#f0f0f0;font-weight:normal;">9.40</div>
<div class="r" style="left:1762px;top:398px;width:91px;height:20px;background:#1d5f3a;border-radius:3px;"></div>
<div class="t " style="left:1507.50px;width:600px;text-align:center;top:403.09px;font-size:11px;line-height:11px;color:#a3c2ab;font-weight:normal;">Apply</div>
<div class="r" style="left:396px;top:423px;width:1357px;height:1px;background:#383838;"></div>
<div class="t " style="left:400.20px;top:429.69px;font-size:11px;line-height:11px;color:#f0f0f0;font-weight:normal;">260</div>
<div class="t " style="left:484.75px;top:429.69px;font-size:11px;line-height:11px;color:#f0f0f0;font-weight:normal;">1 874 660.12</div>
<div class="t " style="left:569.30px;top:429.69px;font-size:11px;line-height:11px;color:#f0f0f0;font-weight:normal;">10 369.76</div>
<div class="t " style="left:653.85px;top:429.69px;font-size:11px;line-height:11px;color:#f0f0f0;font-weight:normal;">10 369.76</div>
<div class="t " style="left:738.40px;top:429.69px;font-size:11px;line-height:11px;color:#f0f0f0;font-weight:normal;">369.76</div>
<div class="t " style="left:822.95px;top:429.69px;font-size:11px;line-height:11px;color:#f0f0f0;font-weight:normal;">47</div>
<div class="t " style="left:907.50px;top:429.69px;font-size:11px;line-height:11px;color:#f0f0f0;font-weight:normal;">28</div>
<div class="t " style="left:992.05px;top:429.69px;font-size:11px;line-height:11px;color:#f0f0f0;font-weight:normal;">19</div>
<div class="t " style="left:1076.60px;top:429.69px;font-size:11px;line-height:11px;color:#f0f0f0;font-weight:normal;">1.05</div>
<div class="r" style="left:1161px;top:433px;width:82px;height:5px;background:#b3bfc5;border-radius:3px;"></div>
<div class="r" style="left:1161px;top:433px;width:20px;height:5px;background:#00a14b;border-radius:3px 0 0 3px;"></div>
<div class="r" style="left:1246px;top:433px;width:82px;height:5px;background:#b3bfc5;border-radius:3px;"></div>
<div class="r" style="left:1246px;top:433px;width:18px;height:5px;background:#00a14b;border-radius:3px 0 0 3px;"></div>
<div class="t " style="left:1330.25px;top:429.69px;font-size:11px;line-height:11px;color:#f0f0f0;font-weight:normal;">3 309.64</div>
<div class="t " style="left:1414.80px;top:429.69px;font-size:11px;line-height:11px;color:#f0f0f0;font-weight:normal;">3 042.56</div>
<div class="t " style="left:1499.35px;top:429.69px;font-size:11px;line-height:11px;color:#f0f0f0;font-weight:normal;">0.02</div>
<div class="t " style="left:1583.90px;top:429.69px;font-size:11px;line-height:11px;color:#f0f0f0;font-weight:normal;">0.02</div>
<div class="t " style="left:1668.45px;top:429.69px;font-size:11px;line-height:11px;color:#f0f0f0;font-weight:normal;">7.87</div>
<div class="r" style="left:1762px;top:423px;width:91px;height:20px;background:#1d5f3a;border-radius:3px;"></div>
<div class="t " style="left:1507.50px;width:600px;text-align:center;top:428.09px;font-size:11px;line-height:11px;color:#a3c2ab;font-weight:normal;">Apply</div>
<div class="r" style="left:396px;top:448px;width:1357px;height:1px;background:#383838;"></div>
<div class="t " style="left:400.20px;top:454.69px;font-size:11px;line-height:11px;color:#f0f0f0;font-weight:normal;">45</div>
<div class="t " style="left:484.75px;top:454.69px;font-size:11px;line-height:11px;color:#f0f0f0;font-weight:normal;">1 790 413.52</div>
<div class="t " style="left:569.30px;top:454.69px;font-size:11px;line-height:11px;color:#f0f0f0;font-weight:normal;">11 573.20</div>
<div class="t " style="left:653.85px;top:454.69px;font-size:11px;line-height:11px;color:#f0f0f0;font-weight:normal;">11 573.20</div>
<div class="t " style="left:738.40px;top:454.69px;font-size:11px;line-height:11px;color:#f0f0f0;font-weight:normal;">1 573.20</div>
<div class="t " style="left:822.95px;top:454.69px;font-size:11px;line-height:11px;color:#f0f0f0;font-weight:normal;">90</div>
<div class="t " style="left:907.50px;top:454.69px;font-size:11px;line-height:11px;color:#f0f0f0;font-weight:normal;">37</div>
<div class="t " style="left:992.05px;top:454.69px;font-size:11px;line-height:11px;color:#f0f0f0;font-weight:normal;">53</div>
<div class="t " style="left:1076.60px;top:454.69px;font-size:11px;line-height:11px;color:#f0f0f0;font-weight:normal;">1.15</div>
<div class="r" style="left:1161px;top:458px;width:82px;height:5px;background:#b3bfc5;border-radius:3px;"></div>
<div class="r" style="left:1161px;top:458px;width:25px;height:5px;background:#00a14b;border-radius:3px 0 0 3px;"></div>
<div class="r" style="left:1246px;top:458px;width:82px;height:5px;background:#b3bfc5;border-radius:3px;"></div>
<div class="r" style="left:1246px;top:458px;width:19px;height:5px;background:#00a14b;border-radius:3px 0 0 3px;"></div>
<div class="t " style="left:1330.25px;top:454.69px;font-size:11px;line-height:11px;color:#f0f0f0;font-weight:normal;">4 895.72</div>
<div class="t " style="left:1414.80px;top:454.69px;font-size:11px;line-height:11px;color:#f0f0f0;font-weight:normal;">3 755.72</div>
<div class="t " style="left:1499.35px;top:454.69px;font-size:11px;line-height:11px;color:#f0f0f0;font-weight:normal;">0.04</div>
<div class="t " style="left:1583.90px;top:454.69px;font-size:11px;line-height:11px;color:#f0f0f0;font-weight:normal;">0.06</div>
<div class="t " style="left:1668.45px;top:454.69px;font-size:11px;line-height:11px;color:#f0f0f0;font-weight:normal;">17.48</div>
<div class="r" style="left:1762px;top:448px;width:91px;height:20px;background:#1d5f3a;border-radius:3px;"></div>
<div class="t " style="left:1507.50px;width:600px;text-align:center;top:453.09px;font-size:11px;line-height:11px;color:#a3c2ab;font-weight:normal;">Apply</div>
<div class="r" style="left:396px;top:473px;width:1357px;height:1px;background:#383838;"></div>
<div class="t " style="left:400.20px;top:479.69px;font-size:11px;line-height:11px;color:#f0f0f0;font-weight:normal;">212</div>
<div class="t " style="left:484.75px;top:479.69px;font-size:11px;line-height:11px;color:#f0f0f0;font-weight:normal;">1 702 118.30</div>
<div class="t " style="left:569.30px;top:479.69px;font-size:11px;line-height:11px;color:#f0f0f0;font-weight:normal;">10 537.00</div>
<div class="t " style="left:653.85px;top:479.69px;font-size:11px;line-height:11px;color:#f0f0f0;font-weight:normal;">10 537.00</div>
<div class="t " style="left:738.40px;top:479.69px;font-size:11px;line-height:11px;color:#f0f0f0;font-weight:normal;">537.00</div>
<div class="t " style="left:822.95px;top:479.69px;font-size:11px;line-height:11px;color:#f0f0f0;font-weight:normal;">75</div>
<div class="t " style="left:907.50px;top:479.69px;font-size:11px;line-height:11px;color:#f0f0f0;font-weight:normal;">27</div>
<div class="t " style="left:992.05px;top:479.69px;font-size:11px;line-height:11px;color:#f0f0f0;font-weight:normal;">48</div>
<div class="t " style="left:1076.60px;top:479.69px;font-size:11px;line-height:11px;color:#f0f0f0;font-weight:normal;">1.05</div>
<div class="r" style="left:1161px;top:483px;width:82px;height:5px;background:#b3bfc5;border-radius:3px;"></div>
<div class="r" style="left:1161px;top:483px;width:21px;height:5px;background:#00a14b;border-radius:3px 0 0 3px;"></div>
<div class="r" style="left:1246px;top:483px;width:82px;height:5px;background:#b3bfc5;border-radius:3px;"></div>
<div class="r" style="left:1246px;top:483px;width:17px;height:5px;background:#00a14b;border-radius:3px 0 0 3px;"></div>
<div class="t " style="left:1330.25px;top:479.69px;font-size:11px;line-height:11px;color:#f0f0f0;font-weight:normal;">3 225.44</div>
<div class="t " style="left:1414.80px;top:479.69px;font-size:11px;line-height:11px;color:#f0f0f0;font-weight:normal;">3 030.44</div>
<div class="t " style="left:1499.35px;top:479.69px;font-size:11px;line-height:11px;color:#f0f0f0;font-weight:normal;">0.02</div>
<div class="t " style="left:1583.90px;top:479.69px;font-size:11px;line-height:11px;color:#f0f0f0;font-weight:normal;">0.02</div>
<div class="t " style="left:1668.45px;top:479.69px;font-size:11px;line-height:11px;color:#f0f0f0;font-weight:normal;">7.16</div>
<div class="r" style="left:1762px;top:473px;width:91px;height:20px;background:#1d5f3a;border-radius:3px;"></div>
<div class="t " style="left:1507.50px;width:600px;text-align:center;top:478.09px;font-size:11px;line-height:11px;color:#a3c2ab;font-weight:normal;">Apply</div>
<div class="r" style="left:396px;top:498px;width:1357px;height:1px;background:#383838;"></div>
<div class="t " style="left:400.20px;top:504.69px;font-size:11px;line-height:11px;color:#f0f0f0;font-weight:normal;">9</div>
<div class="t " style="left:484.75px;top:504.69px;font-size:11px;line-height:11px;color:#f0f0f0;font-weight:normal;">1 655 902.66</div>
<div class="t " style="left:569.30px;top:504.69px;font-size:11px;line-height:11px;color:#f0f0f0;font-weight:normal;">13 667.48</div>
<div class="t " style="left:653.85px;top:504.69px;font-size:11px;line-height:11px;color:#f0f0f0;font-weight:normal;">13 667.48</div>
<div class="t " style="left:738.40px;top:504.69px;font-size:11px;line-height:11px;color:#f0f0f0;font-weight:normal;">3 667.48</div>
<div class="t " style="left:822.95px;top:504.69px;font-size:11px;line-height:11px;color:#f0f0f0;font-weight:normal;">6</div>
<div class="t " style="left:907.50px;top:504.69px;font-size:11px;line-height:11px;color:#f0f0f0;font-weight:normal;">3</div>
<div class="t " style="left:992.05px;top:504.69px;font-size:11px;line-height:11px;color:#f0f0f0;font-weight:normal;">3</div>
<div class="t " style="left:1076.60px;top:504.69px;font-size:11px;line-height:11px;color:#f0f0f0;font-weight:normal;">7.21</div>
<div class="r" style="left:1161px;top:508px;width:82px;height:5px;background:#b3bfc5;border-radius:3px;"></div>
<div class="r" style="left:1161px;top:508px;width:12px;height:5px;background:#00a14b;border-radius:3px 0 0 3px;"></div>
<div class="r" style="left:1246px;top:508px;width:82px;height:5px;background:#b3bfc5;border-radius:3px;"></div>
<div class="r" style="left:1246px;top:508px;width:3px;height:5px;background:#00a14b;border-radius:3px 0 0 3px;"></div>
<div class="t " style="left:1330.25px;top:504.69px;font-size:11px;line-height:11px;color:#f0f0f0;font-weight:normal;">2 292.92</div>
<div class="t " style="left:1414.80px;top:504.69px;font-size:11px;line-height:11px;color:#f0f0f0;font-weight:normal;">311.84</div>
<div class="t " style="left:1499.35px;top:504.69px;font-size:11px;line-height:11px;color:#f0f0f0;font-weight:normal;">0.58</div>
<div class="t " style="left:1583.90px;top:504.69px;font-size:11px;line-height:11px;color:#f0f0f0;font-weight:normal;">0.96</div>
<div class="t " style="left:1668.45px;top:504.69px;font-size:11px;line-height:11px;color:#f0f0f0;font-weight:normal;">611.25</div>
<div class="r" style="left:1762px;top:498px;width:91px;height:20px;background:#1d5f3a;border-radius:3px;"></div>
<div class="t " style="left:1507.50px;width:600px;text-align:center;top:503.09px;font-size:11px;line-height:11px;color:#a3c2ab;font-weight:normal;">Apply</div>
<div class="r" style="left:390px;top:517px;width:1470px;height:5px;background:#565656;"></div>
<svg style="left:1862px;top:96px" width="12" height="10"><path d="M2.5 8 H10.5 L6.5 3 Z" fill="#7a7a7a"/></svg>
<div class="r" style="left:1865px;top:111px;width:7px;height:20px;background:#7a7a7a;border-radius:4px;"></div>
<svg style="left:1862px;top:509px" width="12" height="10"><path d="M1 1.5 H11 L6 8.5 Z" fill="#7a7a7a"/></svg>
<div class="r" style="left:657px;top:528px;width:65px;height:24px;background:#3c3c3c;border-radius:4px 4px 0 0;"></div>
<div class="t " style="left:662.00px;top:535.69px;font-size:11px;line-height:11px;color:#c8c8c8;font-weight:normal;">Parameters</div>
<div class="r" style="left:1799px;top:528px;width:79px;height:19px;background:#3c3c3c;border-radius:4px;"></div>
<div class="t " style="left:1804.00px;top:531.69px;font-size:11px;line-height:11px;color:#e6e6e6;font-weight:normal;">Feedback</div>
<svg style="left:1855px;top:531px" width="16" height="14"><path d="M1.5 1.5 H13.5 V8.5 H6 L3 12 V8.5 H1.5 Z" fill="none" stroke="#fff" stroke-width="1.2"/><rect x="3" y="3" width="7" height="4" fill="#1a8f2c"/><rect x="10" y="3" width="2.5" height="4" fill="#e01010"/></svg>
<div class="r" style="left:384px;top:552px;width:1494px;height:406px;background:#565656;border-radius:5px;"></div>
<div class="r" style="left:390px;top:557px;width:1483px;height:396px;background:#000000;"></div>
<svg style="left:0;top:0" width="1" height="1"><line x1="390" y1="912.5" x2="1833" y2="912.5" stroke="#202024" stroke-width="1"/><line x1="1833" y1="912.5" x2="1836.5" y2="912.5" stroke="#c8c8c8" stroke-width="1"/><line x1="390" y1="889.5" x2="1833" y2="889.5" stroke="#202024" stroke-width="1"/><line x1="1833" y1="889.5" x2="1836.5" y2="889.5" stroke="#c8c8c8" stroke-width="1"/><line x1="390" y1="866.5" x2="1833" y2="866.5" stroke="#202024" stroke-width="1"/><line x1="1833" y1="866.5" x2="1836.5" y2="866.5" stroke="#c8c8c8" stroke-width="1"/><line x1="390" y1="843.5" x2="1833" y2="843.5" stroke="#202024" stroke-width="1"/><line x1="1833" y1="843.5" x2="1836.5" y2="843.5" stroke="#c8c8c8" stroke-width="1"/><line x1="390" y1="821.5" x2="1833" y2="821.5" stroke="#202024" stroke-width="1"/><line x1="1833" y1="821.5" x2="1836.5" y2="821.5" stroke="#c8c8c8" stroke-width="1"/><line x1="390" y1="798.5" x2="1833" y2="798.5" stroke="#202024" stroke-width="1"/><line x1="1833" y1="798.5" x2="1836.5" y2="798.5" stroke="#c8c8c8" stroke-width="1"/><line x1="390" y1="775.5" x2="1833" y2="775.5" stroke="#202024" stroke-width="1"/><line x1="1833" y1="775.5" x2="1836.5" y2="775.5" stroke="#c8c8c8" stroke-width="1"/><line x1="390" y1="752.5" x2="1833" y2="752.5" stroke="#202024" stroke-width="1"/><line x1="1833" y1="752.5" x2="1836.5" y2="752.5" stroke="#c8c8c8" stroke-width="1"/><line x1="390" y1="729.5" x2="1833" y2="729.5" stroke="#202024" stroke-width="1"/><line x1="1833" y1="729.5" x2="1836.5" y2="729.5" stroke="#c8c8c8" stroke-width="1"/><line x1="390" y1="707.5" x2="1833" y2="707.5" stroke="#202024" stroke-width="1"/><line x1="1833" y1="707.5" x2="1836.5" y2="707.5" stroke="#c8c8c8" stroke-width="1"/><line x1="390" y1="684.5" x2="1833" y2="684.5" stroke="#202024" stroke-width="1"/><line x1="1833" y1="684.5" x2="1836.5" y2="684.5" stroke="#c8c8c8" stroke-width="1"/><line x1="390" y1="661.5" x2="1833" y2="661.5" stroke="#202024" stroke-width="1"/><line x1="1833" y1="661.5" x2="1836.5" y2="661.5" stroke="#c8c8c8" stroke-width="1"/><line x1="390" y1="638.5" x2="1833" y2="638.5" stroke="#202024" stroke-width="1"/><line x1="1833" y1="638.5" x2="1836.5" y2="638.5" stroke="#c8c8c8" stroke-width="1"/><line x1="390" y1="615.5" x2="1833" y2="615.5" stroke="#202024" stroke-width="1"/><line x1="1833" y1="615.5" x2="1836.5" y2="615.5" stroke="#c8c8c8" stroke-width="1"/><line x1="390" y1="593.5" x2="1833" y2="593.5" stroke="#202024" stroke-width="1"/><line x1="1833" y1="593.5" x2="1836.5" y2="593.5" stroke="#c8c8c8" stroke-width="1"/><line x1="390" y1="570.5" x2="1833" y2="570.5" stroke="#202024" stroke-width="1"/><line x1="1833" y1="570.5" x2="1836.5" y2="570.5" stroke="#c8c8c8" stroke-width="1"/><line x1="649.5" y1="557" x2="649.5" y2="927" stroke="#202024" stroke-width="1"/><line x1="649.5" y1="927" x2="649.5" y2="930.5" stroke="#c8c8c8" stroke-width="1"/><line x1="711.5" y1="557" x2="711.5" y2="927" stroke="#202024" stroke-width="1"/><line x1="711.5" y1="927" x2="711.5" y2="930.5" stroke="#c8c8c8" stroke-width="1"/><line x1="773.5" y1="557" x2="773.5" y2="927" stroke="#202024" stroke-width="1"/><line x1="773.5" y1="927" x2="773.5" y2="930.5" stroke="#c8c8c8" stroke-width="1"/><line x1="836.5" y1="557" x2="836.5" y2="927" stroke="#202024" stroke-width="1"/><line x1="836.5" y1="927" x2="836.5" y2="930.5" stroke="#c8c8c8" stroke-width="1"/><line x1="898.5" y1="557" x2="898.5" y2="927" stroke="#202024" stroke-width="1"/><line x1="898.5" y1="927" x2="898.5" y2="930.5" stroke="#c8c8c8" stroke-width="1"/><line x1="961.5" y1="557" x2="961.5" y2="927" stroke="#202024" stroke-width="1"/><line x1="961.5" y1="927" x2="961.5" y2="930.5" stroke="#c8c8c8" stroke-width="1"/><line x1="1023.5" y1="557" x2="1023.5" y2="927" stroke="#202024" stroke-width="1"/><line x1="1023.5" y1="927" x2="1023.5" y2="930.5" stroke="#c8c8c8" stroke-width="1"/><line x1="1085.5" y1="557" x2="1085.5" y2="927" stroke="#202024" stroke-width="1"/><line x1="1085.5" y1="927" x2="1085.5" y2="930.5" stroke="#c8c8c8" stroke-width="1"/><line x1="1148.5" y1="557" x2="1148.5" y2="927" stroke="#202024" stroke-width="1"/><line x1="1148.5" y1="927" x2="1148.5" y2="930.5" stroke="#c8c8c8" stroke-width="1"/><line x1="1210.5" y1="557" x2="1210.5" y2="927" stroke="#202024" stroke-width="1"/><line x1="1210.5" y1="927" x2="1210.5" y2="930.5" stroke="#c8c8c8" stroke-width="1"/><line x1="1273.5" y1="557" x2="1273.5" y2="927" stroke="#202024" stroke-width="1"/><line x1="1273.5" y1="927" x2="1273.5" y2="930.5" stroke="#c8c8c8" stroke-width="1"/><line x1="1335.5" y1="557" x2="1335.5" y2="927" stroke="#202024" stroke-width="1"/><line x1="1335.5" y1="927" x2="1335.5" y2="930.5" stroke="#c8c8c8" stroke-width="1"/><line x1="1398.5" y1="557" x2="1398.5" y2="927" stroke="#202024" stroke-width="1"/><line x1="1398.5" y1="927" x2="1398.5" y2="930.5" stroke="#c8c8c8" stroke-width="1"/><line x1="1460.5" y1="557" x2="1460.5" y2="927" stroke="#202024" stroke-width="1"/><line x1="1460.5" y1="927" x2="1460.5" y2="930.5" stroke="#c8c8c8" stroke-width="1"/><line x1="1522.5" y1="557" x2="1522.5" y2="927" stroke="#202024" stroke-width="1"/><line x1="1522.5" y1="927" x2="1522.5" y2="930.5" stroke="#c8c8c8" stroke-width="1"/><line x1="1585.5" y1="557" x2="1585.5" y2="927" stroke="#202024" stroke-width="1"/><line x1="1585.5" y1="927" x2="1585.5" y2="930.5" stroke="#c8c8c8" stroke-width="1"/><line x1="1647.5" y1="557" x2="1647.5" y2="927" stroke="#202024" stroke-width="1"/><line x1="1647.5" y1="927" x2="1647.5" y2="930.5" stroke="#c8c8c8" stroke-width="1"/><line x1="1710.5" y1="557" x2="1710.5" y2="927" stroke="#202024" stroke-width="1"/><line x1="1710.5" y1="927" x2="1710.5" y2="930.5" stroke="#c8c8c8" stroke-width="1"/><line x1="1772.5" y1="557" x2="1772.5" y2="927" stroke="#202024" stroke-width="1"/><line x1="1772.5" y1="927" x2="1772.5" y2="930.5" stroke="#c8c8c8" stroke-width="1"/><line x1="1833" y1="557" x2="1833" y2="927.5" stroke="#c8c8c8" stroke-width="1"/><line x1="390" y1="927.5" x2="1833" y2="927.5" stroke="#c8c8c8" stroke-width="1"/><polygon points="652.3,884.7 653.8,882.7 661.5,883.4 667.2,882.7 672.9,882.7 679.9,882.1 686.3,880.2 692.6,871.9 698.4,874.5 704.7,874.5 711.1,864.3 717.5,864.9 723.8,862.4 730.2,862.4 736.6,863.0 742.9,862.4 748.7,863.4 755.0,860.9 761.4,863.0 767.1,880.2 773.5,878.3 779.9,890.4 785.6,844.6 798.3,818.8 804.7,820.4 811.0,826.7 816.8,821.0 822.5,833.7 834.7,831.8 842.5,831.1 848.4,828.4 859.2,834.8 867.0,835.3 872.9,850.9 878.8,852.4 884.6,862.7 898.4,859.9 905.2,859.5 922.8,867.6 928.7,868.6 935.6,843.1 947.3,848.0 992.4,847.8 998.3,817.6 1004.7,822.5 1010.6,824.4 1016.9,807.3 1023.3,811.7 1035.1,814.6 1041.4,812.7 1053.7,811.2 1058.6,814.6 1067.4,808.8 1076.2,813.2 1091.9,812.5 1097.7,814.6 1104.1,799.0 1110.5,801.9 1116.8,797.0 1122.7,793.1 1129.1,777.4 1135.4,781.8 1141.8,781.5 1148.2,779.9 1154.5,802.9 1160.4,794.6 1166.2,794.7 1178.9,762.4 1190.9,768.6 1198.1,769.6 1204.2,765.5 1210.4,751.7 1216.6,752.1 1222.7,678.1 1228.9,699.7 1236.1,697.2 1248.5,698.0 1254.6,689.0 1260.8,689.8 1267.0,691.4 1279.3,665.7 1291.7,670.0 1297.8,658.1 1310.2,658.1 1316.3,647.8 1322.5,649.3 1328.7,641.0 1335.2,647.5 1341.3,647.3 1347.8,640.5 1360.0,641.9 1366.6,621.1 1372.7,635.3 1379.2,635.8 1385.3,636.3 1391.4,650.3 1397.5,647.1 1404.1,652.7 1416.3,664.4 1422.4,661.6 1435.1,659.2 1447.7,658.3 1453.8,656.0 1459.9,663.5 1466.0,663.3 1472.6,641.4 1479.2,641.4 1485.3,639.1 1491.4,640.5 1497.4,639.1 1503.5,639.8 1515.7,638.6 1522.5,634.2 1528.4,631.5 1534.8,623.9 1541.1,613.1 1547.5,634.8 1553.4,635.6 1566.1,637.6 1572.5,635.1 1578.4,634.4 1585.2,634.8 1591.1,632.7 1597.5,632.2 1603.3,621.9 1609.7,625.8 1616.6,626.0 1622.4,626.0 1628.3,623.9 1634.7,627.8 1641.0,603.8 1647.4,609.7 1653.3,585.2 1659.6,596.0 1665.8,587.0 1672.5,588.3 1684.6,587.5 1690.8,587.0 1697.5,593.6 1703.3,582.5 1709.5,584.6 1715.8,589.6 1721.9,585.8 1728.3,576.6 1734.1,582.0 1740.8,566.3 1747.4,588.0 1753.2,589.1 1759.4,589.1 1765.7,642.4 1771.9,644.1 1778.2,646.2 1784.5,635.8 1790.7,633.3 1796.9,639.1 1803.2,639.1 1809.4,627.4 1815.7,628.3 1821.5,714.8 1821.5,714.8 1815.7,718.2 1809.4,654.9 1803.2,649.1 1796.9,648.2 1790.7,645.7 1784.5,650.2 1778.2,653.2 1771.9,647.4 1765.7,643.2 1759.4,644.9 1753.2,593.3 1747.4,597.5 1740.8,605.8 1734.1,585.0 1728.3,598.6 1721.9,596.6 1715.8,597.5 1709.5,600.0 1703.3,601.3 1697.5,596.6 1690.8,608.3 1684.6,590.0 1678.3,592.5 1672.5,595.8 1665.8,604.1 1659.6,602.3 1653.3,624.4 1647.4,637.1 1641.0,631.2 1634.7,641.7 1628.3,629.9 1622.4,628.3 1616.6,628.3 1609.7,629.9 1603.3,636.4 1597.5,642.7 1591.1,637.6 1585.2,637.6 1578.4,641.0 1566.1,642.7 1560.2,642.5 1553.4,643.9 1547.5,646.9 1541.1,652.8 1534.8,644.4 1528.4,634.6 1522.5,653.7 1515.7,644.6 1509.3,643.0 1503.5,644.2 1497.4,655.5 1491.4,648.0 1485.3,655.0 1479.2,654.1 1472.6,666.3 1466.0,669.6 1459.9,667.7 1453.8,669.6 1447.7,658.3 1441.2,661.6 1435.1,661.1 1428.5,662.5 1422.4,679.4 1416.3,673.8 1409.7,678.0 1404.1,679.9 1397.5,663.5 1391.4,668.6 1385.3,676.6 1379.2,636.5 1372.7,637.2 1366.6,645.6 1360.0,641.9 1353.9,642.8 1347.8,650.5 1341.3,653.2 1335.2,656.9 1334.9,656.5 1328.7,652.8 1322.5,658.5 1316.3,660.6 1311.2,676.0 1304.0,673.9 1297.8,678.7 1285.5,670.0 1279.3,684.2 1273.1,701.7 1260.8,690.6 1254.6,706.2 1248.5,698.6 1242.3,696.8 1236.1,703.8 1228.9,711.0 1222.7,759.3 1216.6,769.2 1210.4,772.1 1204.2,769.6 1198.1,774.1 1190.9,771.7 1184.7,768.6 1173.4,844.7 1166.2,799.4 1160.4,834.2 1154.5,838.1 1148.2,804.8 1141.8,783.8 1135.4,789.2 1129.1,799.5 1122.7,800.0 1116.8,812.2 1110.5,813.2 1103.6,815.1 1097.7,815.6 1091.9,819.7 1083.0,819.0 1076.2,817.6 1066.9,830.3 1061.5,816.1 1054.6,825.4 1047.8,812.9 1041.4,816.6 1029.2,817.1 1023.3,814.6 1016.9,826.4 1010.6,827.4 1004.7,828.8 998.8,848.4 992.4,848.0 979.2,849.0 973.3,853.4 966.9,849.5 950.3,850.0 942.4,854.8 936.6,870.0 929.7,873.0 922.8,869.7 911.1,876.4 898.4,865.6 892.5,869.5 878.8,867.6 867.0,874.9 861.1,836.2 854.3,839.7 842.5,837.2 834.7,833.3 822.5,838.2 816.8,845.8 811.0,832.5 804.7,831.2 798.3,842.0 791.3,861.1 786.0,919.0 779.9,891.9 773.5,899.9 766.5,887.8 760.8,895.5 755.0,868.7 748.7,867.5 742.9,865.2 736.6,867.5 730.2,864.9 722.6,866.2 716.8,873.8 711.1,879.2 704.7,881.7 697.7,876.4 692.0,882.7 686.9,885.3 680.6,887.6 672.9,887.0 667.2,890.6 661.5,894.8 654.5,885.9 652.3,898.0" fill="#7c7c7c" stroke="#a0a0a0" stroke-width="0.7" stroke-linejoin="round"/><polyline points="652.3,884.7 653.8,883.4 661.5,883.8 667.2,883.0 672.9,884.0 679.9,882.5 686.3,880.5 692.6,874.5 698.4,875.4 704.7,876.6 711.1,871.3 717.5,865.2 723.8,862.6 730.2,862.6 736.6,864.3 742.9,862.8 748.7,863.7 755.0,864.3 760.8,882.5 766.5,880.5 773.5,890.1 779.9,890.4 785.6,859.8 798.3,820.1 804.7,827.4 811.0,829.5 816.8,835.9 822.5,834.1 834.7,831.8 842.5,831.1 854.3,836.0 861.1,836.0 867.0,858.3 872.9,859.5 879.7,864.8 886.6,865.4 892.5,864.4 898.4,860.7 905.2,865.4 911.1,868.1 922.8,868.6 928.7,868.6 935.6,852.9 941.9,848.5 947.3,848.5 992.4,848.0 998.3,822.5 1004.7,825.2 1010.6,824.4 1016.9,813.7 1023.3,814.6 1035.1,815.4 1041.4,812.7 1047.8,812.9 1054.6,816.4 1061.5,816.1 1067.4,817.6 1073.3,815.6 1079.1,814.8 1091.9,814.8 1097.7,814.6 1104.1,805.3 1110.5,802.9 1116.8,797.5 1122.7,798.0 1129.1,783.3 1135.4,783.8 1141.8,781.5 1148.2,805.8 1154.5,823.5 1160.4,800.9 1166.2,798.8 1173.4,799.4 1178.9,766.5 1190.9,771.2 1198.1,769.6 1204.2,765.5 1210.4,757.3 1216.6,757.7 1222.7,706.9 1228.9,699.7 1236.1,697.2 1242.3,696.8 1248.5,698.0 1254.6,691.8 1260.8,690.6 1267.0,691.4 1279.3,669.8 1291.7,670.0 1297.8,663.7 1310.2,658.1 1316.3,651.9 1322.5,650.3 1328.7,648.2 1335.2,648.9 1341.3,647.3 1347.8,641.0 1360.0,641.9 1366.6,637.2 1372.7,635.5 1379.2,636.5 1385.3,659.7 1391.4,652.4 1397.5,652.7 1404.1,673.3 1416.3,668.0 1422.4,661.6 1435.1,659.2 1447.7,658.3 1453.8,663.7 1459.9,665.2 1466.0,663.3 1472.6,648.0 1479.2,644.2 1491.4,642.4 1497.4,643.3 1503.5,639.8 1515.7,640.0 1522.5,634.2 1528.4,631.5 1534.8,625.6 1541.1,642.3 1547.5,640.5 1553.4,640.5 1566.1,637.6 1572.5,639.7 1578.4,635.8 1585.2,634.8 1591.1,632.7 1597.5,634.4 1603.3,627.8 1609.7,627.0 1616.6,626.0 1622.4,626.0 1628.3,627.8 1634.7,631.5 1641.0,615.2 1647.4,616.2 1653.3,595.7 1659.6,599.9 1665.8,590.3 1672.5,592.0 1678.3,589.1 1684.6,587.5 1690.8,595.8 1697.5,593.6 1703.3,587.5 1715.8,592.5 1721.9,592.5 1728.3,583.6 1734.1,584.1 1740.8,589.1 1747.4,590.3 1753.2,589.6 1759.4,644.9 1765.7,643.2 1771.9,645.7 1778.2,646.2 1784.5,640.7 1790.7,642.4 1796.9,642.9 1809.4,635.8 1815.7,714.8 1821.5,714.8" fill="none" stroke="#f5f500" stroke-width="1.9" stroke-linejoin="round"/></svg>
<div class="t " style="left:1838.50px;top:906.89px;font-size:11px;line-height:11px;color:#d2d2d2;font-weight:normal;">8000</div>
<div class="t " style="left:1838.50px;top:884.10px;font-size:11px;line-height:11px;color:#d2d2d2;font-weight:normal;">9000</div>
<div class="t " style="left:1838.50px;top:861.31px;font-size:11px;line-height:11px;color:#d2d2d2;font-weight:normal;">10000</div>
<div class="t " style="left:1838.50px;top:838.52px;font-size:11px;line-height:11px;color:#d2d2d2;font-weight:normal;">11000</div>
<div class="t " style="left:1838.50px;top:815.73px;font-size:11px;line-height:11px;color:#d2d2d2;font-weight:normal;">12000</div>
<div class="t " style="left:1838.50px;top:792.94px;font-size:11px;line-height:11px;color:#d2d2d2;font-weight:normal;">13000</div>
<div class="t " style="left:1838.50px;top:770.15px;font-size:11px;line-height:11px;color:#d2d2d2;font-weight:normal;">14000</div>
<div class="t " style="left:1838.50px;top:747.36px;font-size:11px;line-height:11px;color:#d2d2d2;font-weight:normal;">15000</div>
<div class="t " style="left:1838.50px;top:724.57px;font-size:11px;line-height:11px;color:#d2d2d2;font-weight:normal;">16000</div>
<div class="t " style="left:1838.50px;top:701.78px;font-size:11px;line-height:11px;color:#d2d2d2;font-weight:normal;">17000</div>
<div class="t " style="left:1838.50px;top:678.99px;font-size:11px;line-height:11px;color:#d2d2d2;font-weight:normal;">18000</div>
<div class="t " style="left:1838.50px;top:656.20px;font-size:11px;line-height:11px;color:#d2d2d2;font-weight:normal;">19000</div>
<div class="t " style="left:1838.50px;top:633.41px;font-size:11px;line-height:11px;color:#d2d2d2;font-weight:normal;">20000</div>
<div class="t " style="left:1838.50px;top:610.62px;font-size:11px;line-height:11px;color:#d2d2d2;font-weight:normal;">21000</div>
<div class="t " style="left:1838.50px;top:587.83px;font-size:11px;line-height:11px;color:#d2d2d2;font-weight:normal;">22000</div>
<div class="t " style="left:1838.50px;top:565.04px;font-size:11px;line-height:11px;color:#d2d2d2;font-weight:normal;">23000</div>
<div class="t " style="left:348.59px;width:600px;text-align:center;top:933.19px;font-size:11px;line-height:11px;color:#d2d2d2;font-weight:normal;">40</div>
<div class="t " style="left:411.00px;width:600px;text-align:center;top:933.19px;font-size:11px;line-height:11px;color:#d2d2d2;font-weight:normal;">50</div>
<div class="t " style="left:473.41px;width:600px;text-align:center;top:933.19px;font-size:11px;line-height:11px;color:#d2d2d2;font-weight:normal;">60</div>
<div class="t " style="left:535.82px;width:600px;text-align:center;top:933.19px;font-size:11px;line-height:11px;color:#d2d2d2;font-weight:normal;">70</div>
<div class="t " style="left:598.23px;width:600px;text-align:center;top:933.19px;font-size:11px;line-height:11px;color:#d2d2d2;font-weight:normal;">80</div>
<div class="t " style="left:660.64px;width:600px;text-align:center;top:933.19px;font-size:11px;line-height:11px;color:#d2d2d2;font-weight:normal;">90</div>
<div class="t " style="left:723.05px;width:600px;text-align:center;top:933.19px;font-size:11px;line-height:11px;color:#d2d2d2;font-weight:normal;">100</div>
<div class="t " style="left:785.46px;width:600px;text-align:center;top:933.19px;font-size:11px;line-height:11px;color:#d2d2d2;font-weight:normal;">110</div>
<div class="t " style="left:847.87px;width:600px;text-align:center;top:933.19px;font-size:11px;line-height:11px;color:#d2d2d2;font-weight:normal;">120</div>
<div class="t " style="left:910.28px;width:600px;text-align:center;top:933.19px;font-size:11px;line-height:11px;color:#d2d2d2;font-weight:normal;">130</div>
<div class="t " style="left:972.69px;width:600px;text-align:center;top:933.19px;font-size:11px;line-height:11px;color:#d2d2d2;font-weight:normal;">140</div>
<div class="t " style="left:1035.10px;width:600px;text-align:center;top:933.19px;font-size:11px;line-height:11px;color:#d2d2d2;font-weight:normal;">150</div>
<div class="t " style="left:1097.51px;width:600px;text-align:center;top:933.19px;font-size:11px;line-height:11px;color:#d2d2d2;font-weight:normal;">160</div>
<div class="t " style="left:1159.92px;width:600px;text-align:center;top:933.19px;font-size:11px;line-height:11px;color:#d2d2d2;font-weight:normal;">170</div>
<div class="t " style="left:1222.33px;width:600px;text-align:center;top:933.19px;font-size:11px;line-height:11px;color:#d2d2d2;font-weight:normal;">180</div>
<div class="t " style="left:1284.74px;width:600px;text-align:center;top:933.19px;font-size:11px;line-height:11px;color:#d2d2d2;font-weight:normal;">190</div>
<div class="t " style="left:1347.15px;width:600px;text-align:center;top:933.19px;font-size:11px;line-height:11px;color:#d2d2d2;font-weight:normal;">200</div>
<div class="t " style="left:1409.56px;width:600px;text-align:center;top:933.19px;font-size:11px;line-height:11px;color:#d2d2d2;font-weight:normal;">210</div>
<div class="t " style="left:1471.97px;width:600px;text-align:center;top:933.19px;font-size:11px;line-height:11px;color:#d2d2d2;font-weight:normal;">220</div>
<div class="t " style="left:1622.00px;top:964.19px;font-size:11px;line-height:11px;color:#9a9a9a;font-weight:normal;letter-spacing:-0.2px;">Current Time:</div>
<div class="t " style="left:1691.00px;top:964.19px;font-size:11px;line-height:11px;color:#ffffff;font-weight:normal;letter-spacing:-0.14px;">02/04/2019 13:24:56</div>
<div class="t " style="left:1799.00px;top:964.69px;font-size:11px;line-height:11px;color:#ffffff;font-weight:normal;letter-spacing:-0.6px;">UTC+0</div>
<svg style="left:1834px;top:966px" width="8" height="6"><path d="M0.5 0.5 H7 L3.75 5.5 Z" fill="#9a9a9a"/></svg>
<div class="r" style="left:1849px;top:963px;width:1px;height:13px;background:#6a6a6a;"></div>
<div class="t " style="left:1856.00px;top:964.19px;font-size:11px;line-height:11px;color:#8a8a8a;font-weight:normal;letter-spacing:-0.3px;">5 ms / 10 ms</div>
<div class="r" style="left:1883px;top:3px;width:30px;height:347px;background:#505050;border-radius:4px;"></div>
<svg style="left:1883px;top:0" width="30" height="350"><path d="M5 10 H25" stroke="#8a8a8a" stroke-width="1.2" stroke-dasharray="1 1"/><rect x="5" y="16" width="19" height="19" rx="3" fill="#2e2e2e"/><path d="M11 19.5 L11 31 L13.5 28.5 L16 33 L17.5 32 L15.2 27.8 L18.5 27.5 Z" fill="#fff"/><path d="M14.5 43.5 V48 M14.5 51 V55.5 M8.5 49.5 H13 M16 49.5 H20.5" stroke="#d0d0d0" stroke-width="1"/><path d="M14.5 67 V73 M9 72.5 H14.5" stroke="#d0d0d0" stroke-width="1"/><rect x="14.5" y="73.5" width="5.5" height="5.5" fill="none" stroke="#d0d0d0" stroke-width="1"/><line x1="3" y1="88.5" x2="26" y2="88.5" stroke="#6a6a6a" stroke-width="1"/><path d="M9 110 L22 97.5" stroke="#d0d0d0" stroke-width="1"/><path d="M7 112 L8 108 L11 111 Z" fill="#d0d0d0"/><path d="M7.5 129.5 L15.5 121.5 M10.5 133 L18 125.5 M13 135 L19 129 M16 123 L18.5 120.5" stroke="#d0d0d0" stroke-width="1"/><path d="M18.5 128.5 H21.5 M18.5 128.5 V134.5 H21.5 M18.5 131.5 H21" stroke="#d0d0d0" stroke-width="1" fill="none"/><path d="M8 157 L20 145 M11 150 L16.5 155.5 M13.5 147.5 L19 153 M16 145 L21.5 150.5" stroke="#d0d0d0" stroke-width="1"/><path d="M9 169.5 H23 M9 174 H23 M9 178.5 H17" stroke="#d0d0d0" stroke-width="1" stroke-dasharray="1 1.5"/><path d="M19.5 182 V176 H22.5 M19.5 179 H22" stroke="#d0d0d0" stroke-width="1" fill="none"/><path d="M7 184 L8 180.5 L10.5 183 Z" fill="#d0d0d0"/><rect x="10.5" y="195.5" width="13" height="9" fill="none" stroke="#d0d0d0" stroke-width="1"/><path d="M7 207 L9 207 L7 205 Z" fill="#d0d0d0"/><circle cx="16" cy="223" r="5.5" fill="none" stroke="#d0d0d0" stroke-width="1"/><path d="M7 231 L9 231 L7 229 Z" fill="#d0d0d0"/><path d="M9 242 H21 M9 242 V244 M21 242 V244 M15 242 V254 M12.5 254 H17.5" stroke="#d0d0d0" stroke-width="1.1" fill="none"/><line x1="4" y1="262.5" x2="26" y2="262.5" stroke="#666" stroke-width="1"/><rect x="8.5" y="271.5" width="12" height="12" fill="#b090d0" stroke="#c8c8c8" stroke-width="1"/><line x1="4" y1="291.5" x2="26" y2="291.5" stroke="#666" stroke-width="1"/><path d="M8.5 302.5 H11.5 L13 300.5 H18 L19.5 302.5 H22.5 V311.5 H8.5 Z" fill="none" stroke="#d0d0d0" stroke-width="1"/><circle cx="15.5" cy="307" r="2.7" fill="none" stroke="#d0d0d0" stroke-width="1"/><line x1="4" y1="321.5" x2="26" y2="321.5" stroke="#666" stroke-width="1"/><path d="M9.5 340.5 H21.5 L20 338.5 V334 A4.5 4.5 0 0 0 11 334 V338.5 Z" fill="none" stroke="#d0d0d0" stroke-width="1"/><path d="M14.5 342.5 H16.5" stroke="#d0d0d0" stroke-width="1.2"/><path d="M15.5 329 V330.5" stroke="#d0d0d0" stroke-width="1"/></svg>
<div class="r" style="left:0px;top:321px;width:652px;height:660px;background:#ffffff;"></div>
<svg style="left:0;top:321px" width="24" height="24"><rect x="5.5" y="8.5" width="11" height="8" fill="#cfe6f5" stroke="#6a7a88" stroke-width="1"/><path d="M6.5 14 L9 10.5 L11 13 L13 9.5 L15.5 12" fill="none" stroke="#1f78c8" stroke-width="1"/><rect x="2" y="10" width="2" height="9" fill="#777"/><rect x="2.5" y="10.5" width="1" height="1.5" fill="#5fd35f"/><path d="M8 19 H14 M11 17 V19" stroke="#888" stroke-width="1.2"/></svg>
<div class="t " style="left:23.50px;top:330.34px;font-size:12px;line-height:12px;color:#000000;font-weight:normal;letter-spacing:-0.25px;">Task Manager</div>
<svg style="left:0;top:321px" width="1" height="1"><path d="M532 14.5 H543" stroke="#000" stroke-width="1"/><rect x="577.5" y="8.5" width="10" height="10" fill="none" stroke="#000" stroke-width="1"/><path d="M623 8 L634 19 M634 8 L623 19" stroke="#000" stroke-width="1.1"/></svg>
<div class="t " style="left:1.00px;top:354.84px;font-size:12px;line-height:12px;color:#000000;font-weight:normal;letter-spacing:-0.4px;">File</div>
<div class="t " style="left:33.00px;top:354.84px;font-size:12px;line-height:12px;color:#000000;font-weight:normal;">Options</div>
<div class="t " style="left:89.00px;top:354.84px;font-size:12px;line-height:12px;color:#000000;font-weight:normal;">View</div>
<div class="r" style="left:0px;top:369px;width:652px;height:2px;background:#f0f0f0;"></div>
<div class="r" style="left:0px;top:395px;width:652px;height:1px;background:#d9d9d9;"></div>
<div class="r" style="left:0px;top:376px;width:58px;height:19px;background:#f0f0f0;box-sizing:border-box;border:1px solid #d9d9d9;border-bottom:none;border-left:none;"></div>
<div class="t " style="left:2.00px;top:380.84px;font-size:12px;line-height:12px;color:#000000;font-weight:normal;letter-spacing:-0.55px;">Processes</div>
<div class="r" style="left:58px;top:373px;width:82px;height:23px;background:#ffffff;box-sizing:border-box;border:1px solid #d9d9d9;border-bottom:none;"></div>
<div class="t " style="left:65.50px;top:378.84px;font-size:12px;line-height:12px;color:#000000;font-weight:normal;letter-spacing:-0.1px;">Performance</div>
<div class="r" style="left:140px;top:376px;width:38px;height:19px;background:#f0f0f0;box-sizing:border-box;border:1px solid #d9d9d9;border-bottom:none;"></div>
<div class="t " style="left:145.00px;top:380.84px;font-size:12px;line-height:12px;color:#000000;font-weight:normal;letter-spacing:-0.7px;">Users</div>
<div class="r" style="left:178px;top:376px;width:47px;height:19px;background:#f0f0f0;box-sizing:border-box;border:1px solid #d9d9d9;border-bottom:none;"></div>
<div class="t " style="left:184.50px;top:380.84px;font-size:12px;line-height:12px;color:#000000;font-weight:normal;letter-spacing:-0.3px;">Details</div>
<div class="r" style="left:225px;top:376px;width:52px;height:19px;background:#f0f0f0;box-sizing:border-box;border:1px solid #d9d9d9;border-bottom:none;"></div>
<div class="t " style="left:231.50px;top:380.84px;font-size:12px;line-height:12px;color:#000000;font-weight:normal;letter-spacing:-0.55px;">Services</div>
<div class="r" style="left:0px;top:408px;width:202px;height:60px;background:#d9d9d9;"></div>
<div class="r" style="left:0px;top:528px;width:205px;height:60px;background:#e5f3fb;box-sizing:border-box;border-top:1px solid #90cdf0;border-bottom:1px solid #90cdf0;"></div>
<div class="r" style="left:205px;top:418px;width:1px;height:511px;background:#d9d9d9;"></div>
<svg style="left:0;top:0" width="1" height="1"><rect x="8.5" y="418.5" width="59" height="39" fill="#fff" stroke="#117dbb" stroke-width="1.2"/><polygon points="9,457 9.0,451.7 10.2,452.0 11.5,452.0 12.7,451.7 13.9,451.0 15.2,452.0 16.4,450.3 17.6,451.3 18.9,452.0 20.1,452.5 21.3,452.0 22.6,452.5 23.8,449.5 25.0,450.3 26.3,451.0 27.5,452.0 28.7,451.7 30.0,451.7 31.2,451.3 32.4,450.3 33.7,452.0 34.9,449.5 36.1,452.0 37.4,450.3 38.6,450.3 39.9,451.3 41.1,449.5 42.3,451.7 43.6,451.7 44.8,451.3 46.0,451.7 47.3,449.5 48.5,452.0 49.7,450.3 51.0,451.3 52.2,452.5 53.4,451.3 54.7,449.5 55.9,452.5 57.1,451.7 58.4,449.5 59.6,452.0 60.8,452.5 62.1,451.0 63.3,449.5 64.5,452.5 65.8,449.5 67.0,449.5 67,457" fill="#e5f0f8"/><polyline points="9.0,451.7 10.2,452.0 11.5,452.0 12.7,451.7 13.9,451.0 15.2,452.0 16.4,450.3 17.6,451.3 18.9,452.0 20.1,452.5 21.3,452.0 22.6,452.5 23.8,449.5 25.0,450.3 26.3,451.0 27.5,452.0 28.7,451.7 30.0,451.7 31.2,451.3 32.4,450.3 33.7,452.0 34.9,449.5 36.1,452.0 37.4,450.3 38.6,450.3 39.9,451.3 41.1,449.5 42.3,451.7 43.6,451.7 44.8,451.3 46.0,451.7 47.3,449.5 48.5,452.0 49.7,450.3 51.0,451.3 52.2,452.5 53.4,451.3 54.7,449.5 55.9,452.5 57.1,451.7 58.4,449.5 59.6,452.0 60.8,452.5 62.1,451.0 63.3,449.5 64.5,452.5 65.8,449.5 67.0,449.5" fill="none" stroke="#117dbb" stroke-width="1"/><rect x="8.5" y="478.5" width="59" height="39" fill="#fff" stroke="#8b12ae" stroke-width="1.2"/><rect x="9.1" y="505.5" width="57.8" height="11.4" fill="#f4f2f4"/><line x1="9" y1="505.5" x2="67" y2="505.5" stroke="#8b12ae" stroke-width="1"/><rect x="8.5" y="538.5" width="59" height="39" fill="#fff" stroke="#a74f01" stroke-width="1.2"/><line x1="9" y1="541.5" x2="67" y2="541.5" stroke="#d9a070" stroke-width="1"/><polygon points="9,577 9.0,572.5 10.0,573.7 11.0,568.1 11.9,573.9 12.9,570.0 13.9,572.1 14.9,574.0 15.9,570.4 16.9,574.0 17.8,571.4 18.8,573.9 19.8,573.9 20.8,571.5 21.8,564.4 22.8,573.8 23.7,573.3 24.7,568.5 25.7,561.4 26.7,569.3 27.7,571.8 28.7,560.7 29.6,574.0 30.6,563.7 31.6,572.8 32.6,573.7 33.6,573.8 34.6,560.7 35.5,564.7 36.5,573.5 37.5,569.3 38.5,568.3 39.5,572.1 40.5,569.8 41.4,573.9 42.4,574.0 43.4,573.4 44.4,567.5 45.4,571.4 46.4,572.6 47.3,557.2 48.3,559.1 49.3,572.7 50.3,565.2 51.3,555.2 52.3,573.2 53.2,569.4 54.2,570.1 55.2,563.3 56.2,566.6 57.2,572.8 58.2,560.5 59.1,573.8 60.1,571.6 61.1,566.0 62.1,573.7 63.1,570.7 64.1,574.0 65.0,567.7 66.0,565.8 67.0,569.4 67,577" fill="#f6ebe1"/><polyline points="9.0,568.7 10.0,570.4 11.0,562.5 11.9,570.7 12.9,565.2 13.9,568.2 14.9,570.7 15.9,565.8 16.9,570.8 17.8,567.1 18.8,570.7 19.8,570.6 20.8,567.3 21.8,557.4 22.8,570.5 23.7,569.8 24.7,563.1 25.7,553.2 26.7,564.3 27.7,567.7 28.7,552.1 29.6,570.8 30.6,556.4 31.6,569.2 32.6,570.4 33.6,570.5 34.6,552.1 35.5,557.7 36.5,570.2 37.5,564.2 38.5,562.8 39.5,568.1 40.5,564.9 41.4,570.7 42.4,570.7 43.4,570.0 44.4,561.7 45.4,567.2 46.4,568.9 47.3,547.3 48.3,550.0 49.3,569.0 50.3,558.4 51.3,544.4 52.3,569.6 53.2,564.3 54.2,565.4 55.2,555.8 56.2,560.4 57.2,569.2 58.2,552.0 59.1,570.5 60.1,567.4 61.1,559.6 62.1,570.3 63.1,566.1 64.1,570.8 65.0,562.0 66.0,559.3 67.0,564.4" fill="none" stroke="#d98c4c" stroke-width="0.8" stroke-dasharray="1 1"/><polyline points="9.0,572.5 10.0,573.7 11.0,568.1 11.9,573.9 12.9,570.0 13.9,572.1 14.9,574.0 15.9,570.4 16.9,574.0 17.8,571.4 18.8,573.9 19.8,573.9 20.8,571.5 21.8,564.4 22.8,573.8 23.7,573.3 24.7,568.5 25.7,561.4 26.7,569.3 27.7,571.8 28.7,560.7 29.6,574.0 30.6,563.7 31.6,572.8 32.6,573.7 33.6,573.8 34.6,560.7 35.5,564.7 36.5,573.5 37.5,569.3 38.5,568.3 39.5,572.1 40.5,569.8 41.4,573.9 42.4,574.0 43.4,573.4 44.4,567.5 45.4,571.4 46.4,572.6 47.3,557.2 48.3,559.1 49.3,572.7 50.3,565.2 51.3,555.2 52.3,573.2 53.2,569.4 54.2,570.1 55.2,563.3 56.2,566.6 57.2,572.8 58.2,560.5 59.1,573.8 60.1,571.6 61.1,566.0 62.1,573.7 63.1,570.7 64.1,574.0 65.0,567.7 66.0,565.8 67.0,569.4" fill="none" stroke="#a74f01" stroke-width="1"/></svg>
<div class="t " style="left:78.00px;top:418.46px;font-size:16px;line-height:16px;color:#000000;font-weight:normal;letter-spacing:-1.2px;">CPU</div>
<div class="t " style="left:79.00px;top:436.14px;font-size:12px;line-height:12px;color:#000000;font-weight:normal;letter-spacing:-0.45px;">12%&nbsp; 2.20 GHz</div>
<div class="t " style="left:78.00px;top:478.46px;font-size:16px;line-height:16px;color:#000000;font-weight:normal;">Memory</div>
<div class="t " style="left:79.00px;top:496.34px;font-size:12px;line-height:12px;color:#000000;font-weight:normal;letter-spacing:-0.45px;">6.9/21.7 GB (32%)</div>
<div class="t " style="left:78.00px;top:538.46px;font-size:16px;line-height:16px;color:#000000;font-weight:normal;letter-spacing:-0.4px;">Ethernet</div>
<div style="position:absolute;left:0;top:550px;width:205px;height:20px;overflow:hidden;"><div class="t " style="left:79.00px;top:5.84px;font-size:12px;line-height:12px;color:#000000;font-weight:normal;letter-spacing:-0.4px;">S: 112 Kbps R: 32.0 Kbps</div></div>
<div class="t " style="left:230.00px;top:419.99px;font-size:26px;line-height:26px;color:#000000;font-weight:normal;letter-spacing:-1.4px;">CPU</div>
<div class="t " style="right:1291.00px;top:429.38px;font-size:15.5px;line-height:15.5px;color:#000000;font-weight:normal;letter-spacing:-0.35px;">Intel(R) Xeon(R) CPU @ 2.20GHz</div>
<div class="t " style="left:232.00px;top:455.27px;font-size:11.5px;line-height:11.5px;color:#5c5c5c;font-weight:normal;">% Utilization</div>
<div class="t " style="right:1291.00px;top:455.27px;font-size:11.5px;line-height:11.5px;color:#5c5c5c;font-weight:normal;">100%</div>
<svg style="left:0;top:0" width="1" height="1"><rect x="232.5" y="470.5" width="395" height="271.5" fill="#fff"/><line x1="233" y1="715.5" x2="627" y2="715.5" stroke="#d9eaf4" stroke-width="1"/><line x1="233" y1="688.5" x2="627" y2="688.5" stroke="#d9eaf4" stroke-width="1"/><line x1="233" y1="662.5" x2="627" y2="662.5" stroke="#d9eaf4" stroke-width="1"/><line x1="233" y1="635.5" x2="627" y2="635.5" stroke="#d9eaf4" stroke-width="1"/><line x1="233" y1="608.5" x2="627" y2="608.5" stroke="#d9eaf4" stroke-width="1"/><line x1="233" y1="581.5" x2="627" y2="581.5" stroke="#d9eaf4" stroke-width="1"/><line x1="233" y1="554.5" x2="627" y2="554.5" stroke="#d9eaf4" stroke-width="1"/><line x1="233" y1="527.5" x2="627" y2="527.5" stroke="#d9eaf4" stroke-width="1"/><line x1="233" y1="500.5" x2="627" y2="500.5" stroke="#d9eaf4" stroke-width="1"/><line x1="253.5" y1="471" x2="253.5" y2="742" stroke="#d9eaf4" stroke-width="1"/><line x1="319.5" y1="471" x2="319.5" y2="742" stroke="#d9eaf4" stroke-width="1"/><line x1="386.5" y1="471" x2="386.5" y2="742" stroke="#d9eaf4" stroke-width="1"/><line x1="454.5" y1="471" x2="454.5" y2="742" stroke="#d9eaf4" stroke-width="1"/><line x1="520.5" y1="471" x2="520.5" y2="742" stroke="#d9eaf4" stroke-width="1"/><line x1="588.5" y1="471" x2="588.5" y2="742" stroke="#d9eaf4" stroke-width="1"/><polygon points="232.5,742 232.5,705.7 239.2,700.4 245.5,700.4 252.4,704.4 259.4,689.8 265.7,707.6 272.1,708.7 279.6,699.5 286.5,707.6 292.6,700.6 299.4,705.5 306.5,694.5 312.5,712.3 319.2,709.1 326.6,710.5 332.7,701.5 339.6,711.6 346.5,699.9 353.7,711.6 359.6,693.8 366.2,698.3 373.1,700.4 379.5,704.6 386.4,700.6 393.3,712.3 400.2,712.3 406.6,711.6 413.5,713.7 419.9,704.6 426.3,706.6 428.0,706.2 433.3,705.5 440.5,698.5 446.6,701.5 453.5,707.6 459.9,703.1 466.3,698.8 473.5,710.5 480.1,700.9 486.5,691.6 493.4,702.5 500.3,694.5 506.7,703.4 513.6,699.5 520.3,702.5 527.4,712.3 533.5,687.9 540.7,706.6 547.6,705.5 553.4,697.4 560.3,706.2 567.5,680.7 573.4,700.4 580.5,703.4 587.5,685.0 593.8,695.6 600.4,706.6 607.4,697.4 614.2,709.4 620.4,703.6 627.3,710.0 627.5,742" fill="#f1f6fa" fill-opacity="0.9"/><line x1="233" y1="715.5" x2="627" y2="715.5" stroke="#d9eaf4" stroke-width="1" stroke-opacity="0.6"/><line x1="233" y1="688.5" x2="627" y2="688.5" stroke="#d9eaf4" stroke-width="1" stroke-opacity="0.6"/><line x1="233" y1="662.5" x2="627" y2="662.5" stroke="#d9eaf4" stroke-width="1" stroke-opacity="0.6"/><line x1="233" y1="635.5" x2="627" y2="635.5" stroke="#d9eaf4" stroke-width="1" stroke-opacity="0.6"/><line x1="233" y1="608.5" x2="627" y2="608.5" stroke="#d9eaf4" stroke-width="1" stroke-opacity="0.6"/><line x1="233" y1="581.5" x2="627" y2="581.5" stroke="#d9eaf4" stroke-width="1" stroke-opacity="0.6"/><line x1="233" y1="554.5" x2="627" y2="554.5" stroke="#d9eaf4" stroke-width="1" stroke-opacity="0.6"/><line x1="233" y1="527.5" x2="627" y2="527.5" stroke="#d9eaf4" stroke-width="1" stroke-opacity="0.6"/><line x1="233" y1="500.5" x2="627" y2="500.5" stroke="#d9eaf4" stroke-width="1" stroke-opacity="0.6"/><line x1="253.5" y1="471" x2="253.5" y2="742" stroke="#d9eaf4" stroke-width="1" stroke-opacity="0.6"/><line x1="319.5" y1="471" x2="319.5" y2="742" stroke="#d9eaf4" stroke-width="1" stroke-opacity="0.6"/><line x1="386.5" y1="471" x2="386.5" y2="742" stroke="#d9eaf4" stroke-width="1" stroke-opacity="0.6"/><line x1="454.5" y1="471" x2="454.5" y2="742" stroke="#d9eaf4" stroke-width="1" stroke-opacity="0.6"/><line x1="520.5" y1="471" x2="520.5" y2="742" stroke="#d9eaf4" stroke-width="1" stroke-opacity="0.6"/><line x1="588.5" y1="471" x2="588.5" y2="742" stroke="#d9eaf4" stroke-width="1" stroke-opacity="0.6"/><polyline points="232.5,705.7 239.2,700.4 245.5,700.4 252.4,704.4 259.4,689.8 265.7,707.6 272.1,708.7 279.6,699.5 286.5,707.6 292.6,700.6 299.4,705.5 306.5,694.5 312.5,712.3 319.2,709.1 326.6,710.5 332.7,701.5 339.6,711.6 346.5,699.9 353.7,711.6 359.6,693.8 366.2,698.3 373.1,700.4 379.5,704.6 386.4,700.6 393.3,712.3 400.2,712.3 406.6,711.6 413.5,713.7 419.9,704.6 426.3,706.6 428.0,706.2 433.3,705.5 440.5,698.5 446.6,701.5 453.5,707.6 459.9,703.1 466.3,698.8 473.5,710.5 480.1,700.9 486.5,691.6 493.4,702.5 500.3,694.5 506.7,703.4 513.6,699.5 520.3,702.5 527.4,712.3 533.5,687.9 540.7,706.6 547.6,705.5 553.4,697.4 560.3,706.2 567.5,680.7 573.4,700.4 580.5,703.4 587.5,685.0 593.8,695.6 600.4,706.6 607.4,697.4 614.2,709.4 620.4,703.6 627.3,710.0" fill="none" stroke="#117dbb" stroke-width="1.2"/><rect x="232.5" y="470.5" width="395" height="271.5" fill="none" stroke="#117dbb" stroke-width="1.2"/></svg>
<div class="t " style="left:232.00px;top:747.77px;font-size:11.5px;line-height:11.5px;color:#5c5c5c;font-weight:normal;letter-spacing:-0.2px;">60 seconds</div>
<div class="t " style="right:1291.00px;top:747.77px;font-size:11.5px;line-height:11.5px;color:#5c5c5c;font-weight:normal;">0</div>
<div class="t " style="left:232.00px;top:772.27px;font-size:11.5px;line-height:11.5px;color:#5c5c5c;font-weight:normal;letter-spacing:0.35px;">Utilization</div>
<div class="t " style="left:305.00px;top:772.27px;font-size:11.5px;line-height:11.5px;color:#5c5c5c;font-weight:normal;">Speed</div>
<div class="t " style="left:232.00px;top:790.62px;font-size:19px;line-height:19px;color:#000000;font-weight:normal;letter-spacing:-0.6px;">12%</div>
<div class="t " style="left:305.00px;top:790.62px;font-size:19px;line-height:19px;color:#000000;font-weight:normal;">2.20 GHz</div>
<div class="t " style="left:232.00px;top:822.77px;font-size:11.5px;line-height:11.5px;color:#5c5c5c;font-weight:normal;">Processes</div>
<div class="t " style="left:304.00px;top:822.77px;font-size:11.5px;line-height:11.5px;color:#5c5c5c;font-weight:normal;">Threads</div>
<div class="t " style="left:367.00px;top:822.77px;font-size:11.5px;line-height:11.5px;color:#5c5c5c;font-weight:normal;">Handles</div>
<div class="t " style="left:232.00px;top:841.22px;font-size:19px;line-height:19px;color:#000000;font-weight:normal;">103</div>
<div class="t " style="left:304.00px;top:841.22px;font-size:19px;line-height:19px;color:#000000;font-weight:normal;">1301</div>
<div class="t " style="left:367.00px;top:841.22px;font-size:19px;line-height:19px;color:#000000;font-weight:normal;">46079</div>
<div class="t " style="left:232.00px;top:873.77px;font-size:11.5px;line-height:11.5px;color:#5c5c5c;font-weight:normal;">Up time</div>
<div class="t " style="left:232.00px;top:892.42px;font-size:19px;line-height:19px;color:#000000;font-weight:normal;letter-spacing:-0.2px;">1:15:48:11</div>
<div class="t " style="left:434.00px;top:772.27px;font-size:11.5px;line-height:11.5px;color:#5c5c5c;font-weight:normal;">Base speed:</div>
<div class="t " style="left:544.00px;top:772.27px;font-size:11.5px;line-height:11.5px;color:#000000;font-weight:normal;">2.20 GHz</div>
<div class="t " style="left:434.00px;top:790.17px;font-size:11.5px;line-height:11.5px;color:#5c5c5c;font-weight:normal;">Sockets:</div>
<div class="t " style="left:544.00px;top:790.17px;font-size:11.5px;line-height:11.5px;color:#000000;font-weight:normal;">1</div>
<div class="t " style="left:434.00px;top:808.07px;font-size:11.5px;line-height:11.5px;color:#5c5c5c;font-weight:normal;">Virtual processors:</div>
<div class="t " style="left:544.00px;top:808.07px;font-size:11.5px;line-height:11.5px;color:#000000;font-weight:normal;">24</div>
<div class="t " style="left:434.00px;top:825.97px;font-size:11.5px;line-height:11.5px;color:#5c5c5c;font-weight:normal;">Virtual machine:</div>
<div class="t " style="left:544.00px;top:825.97px;font-size:11.5px;line-height:11.5px;color:#000000;font-weight:normal;">Yes</div>
<div class="t " style="left:434.00px;top:843.87px;font-size:11.5px;line-height:11.5px;color:#5c5c5c;font-weight:normal;">L1 cache:</div>
<div class="t " style="left:544.00px;top:843.87px;font-size:11.5px;line-height:11.5px;color:#000000;font-weight:normal;">N/A</div>
<svg style="left:0;top:940px" width="140" height="30"><circle cx="11.5" cy="16" r="8" fill="none" stroke="#8a8a8a" stroke-width="1"/><path d="M7.5 18.5 L11.5 14 L15.5 18.5" fill="none" stroke="#6a6a6a" stroke-width="1.1"/><line x1="104.5" y1="8" x2="104.5" y2="24" stroke="#d0d0d0" stroke-width="1"/><circle cx="120" cy="16" r="7.5" fill="#e8e8e8" stroke="#7a7a7a" stroke-width="1.2"/><path d="M117 11 L123 21" stroke="#c01010" stroke-width="1.6"/></svg>
<div class="t " style="left:28.00px;top:950.84px;font-size:12px;line-height:12px;color:#000000;font-weight:normal;letter-spacing:-0.3px;">Fewer details</div>
<div class="t " style="left:134.00px;top:950.84px;font-size:12px;line-height:12px;color:#0066cc;font-weight:normal;">Open Resource Monitor</div>
<div class="r" style="left:0px;top:981px;width:1919px;height:40px;background:#0b0d14;"></div>
<div class="r" style="left:489px;top:981px;width:48px;height:40px;background:#2d3038;"></div>
<div class="r" style="left:248px;top:1019px;width:40px;height:2px;background:#76b9ed;"></div>
<div class="r" style="left:444px;top:1019px;width:40px;height:2px;background:#76b9ed;"></div>
<div class="r" style="left:489px;top:1019px;width:48px;height:2px;background:#76b9ed;"></div>
<svg style="left:0;top:981px" width="1919" height="40"><path d="M15 13.5 L22 12.5 V19.5 H15 Z M23 12.3 L31 11 V19.5 H23 Z M15 20.5 H22 V27.5 L15 26.5 Z M23 20.5 H31 V29 L23 27.7 Z" fill="#fff"/><circle cx="73.5" cy="18" r="5.5" fill="none" stroke="#fff" stroke-width="1.3"/><path d="M69.5 22 L63.5 28" stroke="#fff" stroke-width="1.5"/><rect x="111.5" y="14.5" width="10" height="11" fill="none" stroke="#fff" stroke-width="1.2"/><path d="M111 12.5 H122 M111 27.5 H122 M125 12.5 V14 M125 16.5 V27.5" stroke="#fff" stroke-width="1.2"/><ellipse cx="170" cy="20" rx="13" ry="5.5" transform="rotate(-38 170 20)" fill="none" stroke="#f2c21a" stroke-width="2"/><path d="M176.5 22.5 A7.3 7.3 0 1 1 176.8 18.5" fill="none" stroke="#35aef0" stroke-width="4.6"/><rect x="163" y="18" width="14" height="3.6" fill="#35aef0"/><path d="M176.5 22.5 A7.3 7.3 0 1 1 176.8 18.5" fill="none" stroke="#1d6fb8" stroke-width="0.6" stroke-opacity="0.6"/><path d="M208 13 H216 L218 15 H230 V29 H208 Z" fill="#f4d36a"/><rect x="208" y="17" width="22" height="12" fill="#ffe28c"/><path d="M213 29 V22 H225 V29 H222 V25 H216 V29 Z" fill="#2d9fe0"/><circle cx="268" cy="19.5" r="12" fill="#e8e8e8"/><circle cx="268" cy="19.5" r="10.5" fill="#e01818"/><path d="M261 24 C263 15 272 12 276 15 C273 14 268 17 266 23 Z" fill="#fff"/><circle cx="317" cy="20" r="11" fill="#db4437"/><path d="M317 20 L307.5 25.5 A11 11 0 0 0 322.5 29.5 Z" fill="#0f9d58"/><path d="M317 20 L322.5 29.5 A11 11 0 0 0 327.5 14.5 Z" fill="#ffcd40"/><path d="M317 20 L327.5 14.5 A11 11 0 0 0 307.5 25.5 Z" fill="none"/><circle cx="317" cy="20" r="5" fill="#fff"/><circle cx="317" cy="20" r="3.8" fill="#4285f4"/><circle cx="366" cy="20" r="11.5" fill="#fff"/><rect x="359" y="13" width="14" height="14" rx="2" fill="#2f6fe8"/><path d="M362 19 L368 16 L371 21 L366 24 Z" fill="#fff"/><circle cx="415" cy="20" r="11.5" fill="#fff"/><rect x="408" y="13" width="14" height="14" rx="2" fill="#1f4fd0"/><path d="M415 15.5 L419.5 20 L415 24.5 L410.5 20 Z" fill="#fff"/><circle cx="415" cy="20" r="1.8" fill="#e03020"/><rect x="452" y="9" width="11" height="21" fill="#2b8de0"/><rect x="456" y="17" width="20" height="13" fill="#6b8aa0" stroke="#c8d8e4" stroke-width="0.8"/><rect x="462" y="14" width="8" height="3" fill="none" stroke="#c8d8e4" stroke-width="0.8"/><rect x="502" y="9" width="19" height="14" fill="#dfe8ee" stroke="#9aa4aa" stroke-width="1"/><path d="M504 19 L508 14 L511 18 L514 12 L518 17" fill="none" stroke="#3a8fd8" stroke-width="1"/><rect x="500" y="14" width="3" height="12" fill="#9a9a9a"/><path d="M507 26 H517 L519 29 H505 Z" fill="#b8b8b8"/><path d="M1701 23 L1706.5 17.5 L1712 23" fill="none" stroke="#fff" stroke-width="1.2"/><rect x="1722.5" y="12.5" width="15" height="10" fill="none" stroke="#fff" stroke-width="1"/><rect x="1723.5" y="12.5" width="4" height="4" fill="none" stroke="#fff" stroke-width="1"/><path d="M1730 22.5 V26.5 M1725 26.5 H1735" stroke="#fff" stroke-width="1"/><path d="M1746.5 16.5 H1749.5 L1753.5 12.5 V27.5 L1749.5 23.5 H1746.5 Z" fill="none" stroke="#fff" stroke-width="1"/><circle cx="1758" cy="25" r="4.5" fill="#e81123"/><path d="M1756 23 L1760 27 M1760 23 L1756 27" stroke="#fff" stroke-width="1"/><path d="M1879.5 13.5 H1895.5 V24.5 H1886 L1882 28 V24.5 H1879.5 Z" fill="#fff"/><path d="M1882 16.5 H1893 M1882 19 H1893 M1882 21.5 H1890" stroke="#0b0d14" stroke-width="1"/><circle cx="1894" cy="29" r="6" fill="#1c1f26" stroke="#888" stroke-width="1"/><line x1="1915.5" y1="0" x2="1915.5" y2="40" stroke="#4a4d54" stroke-width="1"/></svg>
<div class="t " style="left:1594.00px;width:600px;text-align:center;top:1005.88px;font-size:9px;line-height:9px;color:#fff;font-weight:bold;">1</div>
<div class="t " style="left:1772.00px;top:995.84px;font-size:12px;line-height:12px;color:#fff;font-weight:normal;">ENG</div>
<div class="t " style="left:1534.00px;width:600px;text-align:center;top:986.84px;font-size:12px;line-height:12px;color:#fff;font-weight:normal;">1:24 PM</div>
<div class="t " style="left:1534.00px;width:600px;text-align:center;top:1004.84px;font-size:12px;line-height:12px;color:#fff;font-weight:normal;">4/2/2019</div>
</body></html>
